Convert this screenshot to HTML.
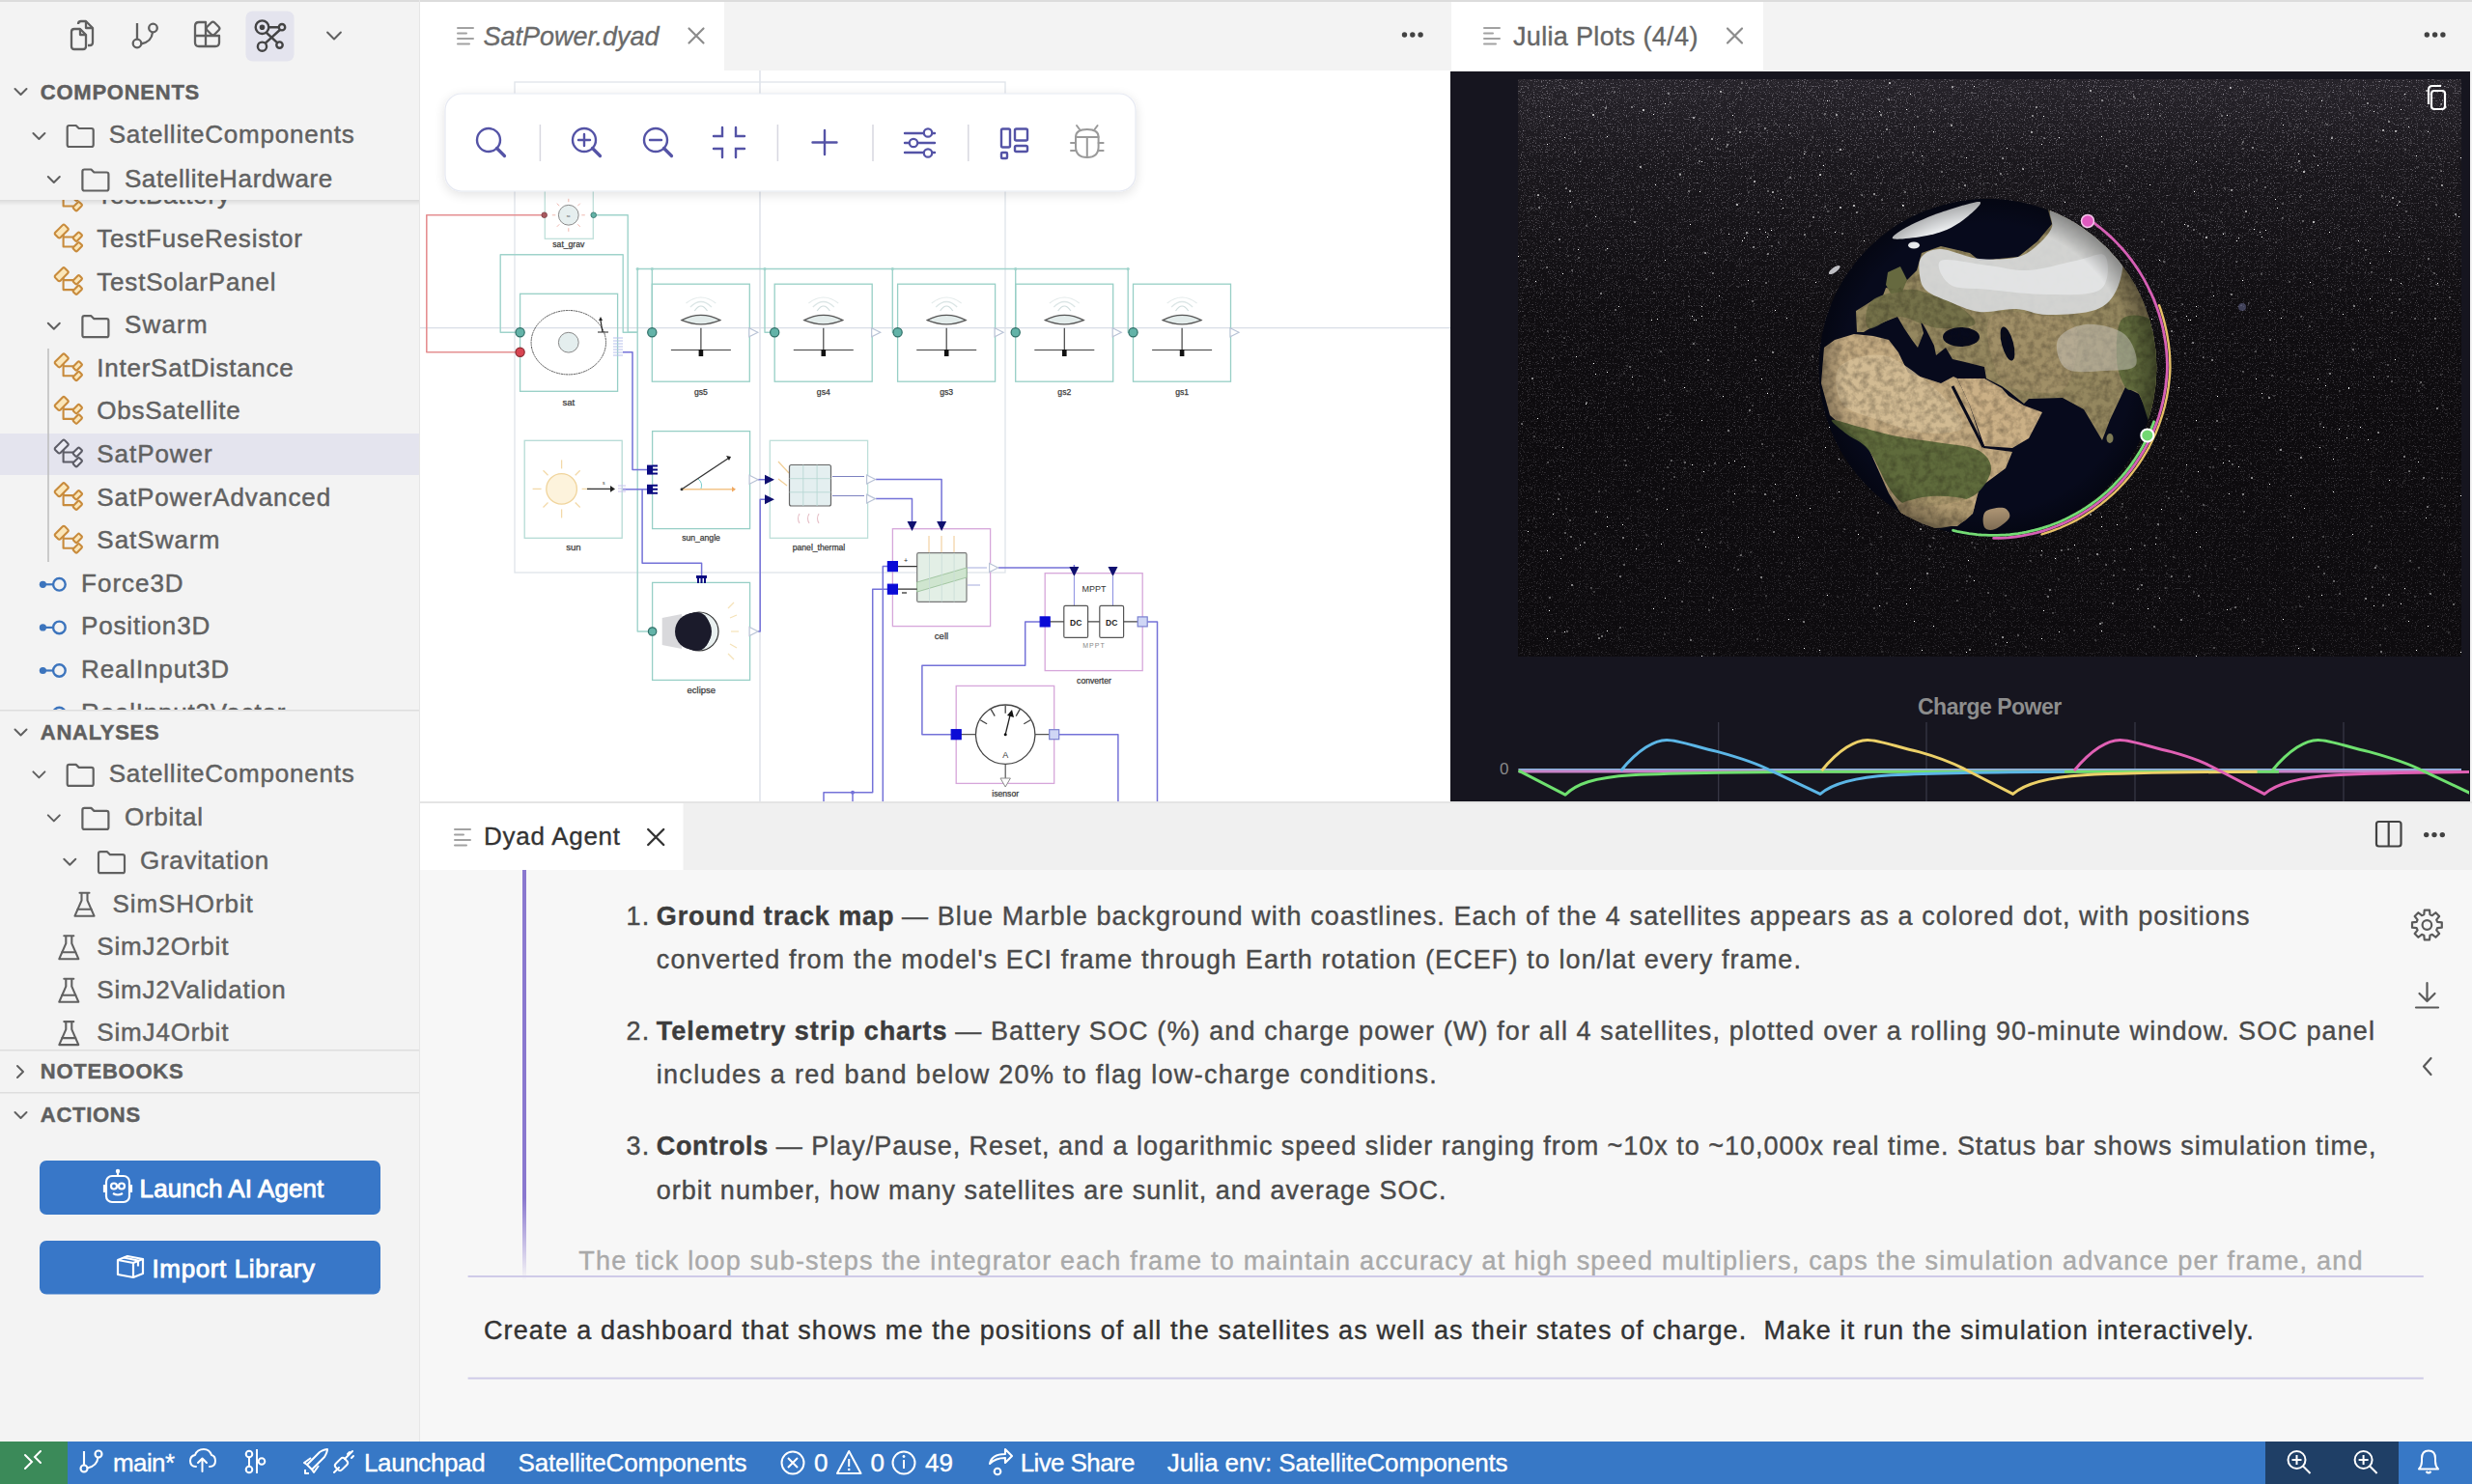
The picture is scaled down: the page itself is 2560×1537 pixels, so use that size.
<!DOCTYPE html>
<html><head><meta charset="utf-8"><style>
html,body{margin:0;padding:0;}
body{width:2560px;height:1537px;overflow:hidden;background:#f3f3f3;font-family:"Liberation Sans",sans-serif;}
svg{display:block;font-family:"Liberation Sans",sans-serif;}
</style></head><body>
<svg width="2560" height="1537" viewBox="0 0 2560 1537">
<defs>
<filter id="tbshadow" x="-10%" y="-30%" width="120%" height="160%"><feGaussianBlur in="SourceAlpha" stdDeviation="6"/><feOffset dy="3"/><feComponentTransfer><feFuncA type="linear" slope="0.12"/></feComponentTransfer><feMerge><feMergeNode/><feMergeNode in="SourceGraphic"/></feMerge></filter>
<linearGradient id="stickyshadow" x1="0" y1="0" x2="0" y2="1"><stop offset="0" stop-color="#000" stop-opacity="0.10"/><stop offset="1" stop-color="#000" stop-opacity="0"/></linearGradient>
<linearGradient id="fadebar" x1="0" y1="0" x2="0" y2="1"><stop offset="0" stop-color="#8a78cf"/><stop offset="0.8" stop-color="#8a78cf"/><stop offset="1" stop-color="#8a78cf" stop-opacity="0"/></linearGradient>
<linearGradient id="fadetext" x1="0" y1="0" x2="0" y2="1"><stop offset="0" stop-color="#f7f7f7" stop-opacity="0"/><stop offset="1" stop-color="#f7f7f7" stop-opacity="0.75"/></linearGradient>
</defs>
<rect x="0" y="0" width="2560" height="1537" fill="#f3f3f3"/>
<rect x="0" y="0" width="435" height="1493" fill="#f3f3f3"/>
<rect x="435" y="0" width="1067" height="73" fill="#f3f3f3"/>
<rect x="435" y="73" width="1067" height="757" fill="#ffffff"/>
<rect x="1502" y="0" width="1058" height="73" fill="#f3f3f3"/>
<rect x="1502" y="74" width="1056" height="756" fill="#16151f"/>
<rect x="435" y="830" width="2125" height="663" fill="#f7f7f7"/>
<rect x="435" y="832" width="2125" height="69" fill="#f0f0f0"/>
<rect x="435" y="830" width="2125" height="2" fill="#e4e4e4"/>
<rect x="0" y="0" width="2560" height="2" fill="#dcdcdc"/>
<rect x="434" y="0" width="1" height="1493" fill="#e6e6e6"/>
<rect x="254.5" y="11.5" width="50" height="52" rx="7" fill="#e4e4ee"/>
<g fill="none" stroke="#606060" stroke-width="2.3" stroke-linejoin="round"><path d="M81,25 q0,-3 3,-3 h5 l7,7 v15 q0,3 -3,3 h-2"/><path d="M74,33 q0,-3 3,-3 h6 l6,6 v12 q0,3 -3,3 h-9 q-3,0 -3,-3 z"/><path d="M83,30 v6 h6"/><path d="M89,22 v7 h7"/></g>
<g fill="none" stroke="#606060" stroke-width="2.3"><path d="M142,24 V40"/><circle cx="142" cy="45" r="4.3"/><circle cx="158.5" cy="29" r="4.3"/><path d="M158,33.5 q-1,10 -12,12"/></g>
<g fill="none" stroke="#606060" stroke-width="2.3" stroke-linejoin="round"><path d="M202,27 q0,-4 4,-4 h7 v14 h14 v7 q0,4 -4,4 h-17 q-4,0 -4,-4 z"/><path d="M202,37 h11 v11"/><rect x="215" y="24" width="11" height="11" rx="2.5" transform="rotate(45 220.5 29.5)"/></g>
<g fill="none" stroke="#444444" stroke-width="2.4"><circle cx="271.5" cy="28.2" r="6.8"/><circle cx="271.5" cy="28.2" r="1.6" fill="#444444"/><circle cx="292" cy="28.2" r="3.2"/><circle cx="271.5" cy="48.2" r="4.6"/><circle cx="289.5" cy="46.6" r="3.2"/><path d="M278.3,28.2 H288.8 M275.5,33.5 L287.3,44.3 M289.8,31 L274.6,44.8"/></g>
<path d="M339.1,33.5 L346.0,40.5 L352.9,33.5" fill="none" stroke="#606060" stroke-width="2" stroke-linecap="round" stroke-linejoin="round"/>
<path d="M15.5,92.0 L21.5,98.0 L27.5,92.0" fill="none" stroke="#606060" stroke-width="2" stroke-linecap="round" stroke-linejoin="round"/>
<text x="41.8" y="102.5" font-size="22" fill="#5f5f5f" font-weight="bold" textLength="164.5" lengthAdjust="spacing" stroke="#5f5f5f" stroke-width="0.45" style="white-space:pre">COMPONENTS</text>
<path d="M34.4,138.0 L40.4,144.0 L46.4,138.0" fill="none" stroke="#606060" stroke-width="2" stroke-linecap="round" stroke-linejoin="round"/>
<path d="M69.7,132 q0,-2 2,-2 h7 l3,3 h13 q2,0 2,2 v15 q0,2 -2,2 h-23 q-2,0 -2,-2 z" fill="none" stroke="#616161" stroke-width="2.2" stroke-linejoin="round"/>
<text x="112.7" y="148.3" font-size="26" fill="#616161" textLength="254.0" lengthAdjust="spacing" stroke="#616161" stroke-width="0.45" style="white-space:pre">SatelliteComponents</text>
<path d="M49.8,183.0 L55.8,189.0 L61.8,183.0" fill="none" stroke="#606060" stroke-width="2" stroke-linecap="round" stroke-linejoin="round"/>
<path d="M85.4,177.5 q0,-2 2,-2 h7 l3,3 h13 q2,0 2,2 v15 q0,2 -2,2 h-23 q-2,0 -2,-2 z" fill="none" stroke="#616161" stroke-width="2.2" stroke-linejoin="round"/>
<text x="128.9" y="193.6" font-size="26" fill="#616161" textLength="215.4" lengthAdjust="spacing" stroke="#616161" stroke-width="0.45" style="white-space:pre">SatelliteHardware</text>
<clipPath id="clipcomp"><rect x="0" y="207" width="434" height="528"/></clipPath>
<g clip-path="url(#clipcomp)">
<rect x="0" y="449" width="434" height="43" fill="#e4e4ee"/>
<path d="M50,361 V582" stroke="#bdbdbd" stroke-width="1.5"/>
<g transform="translate(57,192)" fill="#fbe6b8" stroke="#c88b3c" stroke-width="2.1" stroke-linejoin="round"><path d="M8.6,8 V21.5 H19 M8.6,11.5 H19" fill="none"/><rect x="-0.3" y="1.85" width="14" height="7.5" rx="1.6" transform="rotate(-45 6.7 5.6)"/><rect x="18.8" y="8.45" width="9" height="5.5" rx="1.2" transform="rotate(-45 23.3 11.2)"/><rect x="18.8" y="18.95" width="9" height="5.5" rx="1.2" transform="rotate(-45 23.3 21.7)"/></g>
<text x="100.3" y="211.4" font-size="26" fill="#616161" textLength="137.7" lengthAdjust="spacing" stroke="#616161" stroke-width="0.45" style="white-space:pre">TestBattery</text>
<g transform="translate(57,234)" fill="#fbe6b8" stroke="#c88b3c" stroke-width="2.1" stroke-linejoin="round"><path d="M8.6,8 V21.5 H19 M8.6,11.5 H19" fill="none"/><rect x="-0.3" y="1.85" width="14" height="7.5" rx="1.6" transform="rotate(-45 6.7 5.6)"/><rect x="18.8" y="8.45" width="9" height="5.5" rx="1.2" transform="rotate(-45 23.3 11.2)"/><rect x="18.8" y="18.95" width="9" height="5.5" rx="1.2" transform="rotate(-45 23.3 21.7)"/></g>
<text x="100.3" y="256.0" font-size="26" fill="#616161" textLength="212.6" lengthAdjust="spacing" stroke="#616161" stroke-width="0.45" style="white-space:pre">TestFuseResistor</text>
<g transform="translate(57,278.6)" fill="#fbe6b8" stroke="#c88b3c" stroke-width="2.1" stroke-linejoin="round"><path d="M8.6,8 V21.5 H19 M8.6,11.5 H19" fill="none"/><rect x="-0.3" y="1.85" width="14" height="7.5" rx="1.6" transform="rotate(-45 6.7 5.6)"/><rect x="18.8" y="8.45" width="9" height="5.5" rx="1.2" transform="rotate(-45 23.3 11.2)"/><rect x="18.8" y="18.95" width="9" height="5.5" rx="1.2" transform="rotate(-45 23.3 21.7)"/></g>
<text x="100.3" y="300.6" font-size="26" fill="#616161" textLength="185.2" lengthAdjust="spacing" stroke="#616161" stroke-width="0.45" style="white-space:pre">TestSolarPanel</text>
<path d="M49.8,334.7 L55.8,340.7 L61.8,334.7" fill="none" stroke="#606060" stroke-width="2" stroke-linecap="round" stroke-linejoin="round"/>
<path d="M85.4,329.2 q0,-2 2,-2 h7 l3,3 h13 q2,0 2,2 v15 q0,2 -2,2 h-23 q-2,0 -2,-2 z" fill="none" stroke="#616161" stroke-width="2.2" stroke-linejoin="round"/>
<text x="128.9" y="345.2" font-size="26" fill="#616161" textLength="85.7" lengthAdjust="spacing" stroke="#616161" stroke-width="0.45" style="white-space:pre">Swarm</text>
<g transform="translate(57,367.8)" fill="#fbe6b8" stroke="#c88b3c" stroke-width="2.1" stroke-linejoin="round"><path d="M8.6,8 V21.5 H19 M8.6,11.5 H19" fill="none"/><rect x="-0.3" y="1.85" width="14" height="7.5" rx="1.6" transform="rotate(-45 6.7 5.6)"/><rect x="18.8" y="8.45" width="9" height="5.5" rx="1.2" transform="rotate(-45 23.3 11.2)"/><rect x="18.8" y="18.95" width="9" height="5.5" rx="1.2" transform="rotate(-45 23.3 21.7)"/></g>
<text x="100.3" y="389.8" font-size="26" fill="#616161" textLength="203.5" lengthAdjust="spacing" stroke="#616161" stroke-width="0.45" style="white-space:pre">InterSatDistance</text>
<g transform="translate(57,412.4)" fill="#fbe6b8" stroke="#c88b3c" stroke-width="2.1" stroke-linejoin="round"><path d="M8.6,8 V21.5 H19 M8.6,11.5 H19" fill="none"/><rect x="-0.3" y="1.85" width="14" height="7.5" rx="1.6" transform="rotate(-45 6.7 5.6)"/><rect x="18.8" y="8.45" width="9" height="5.5" rx="1.2" transform="rotate(-45 23.3 11.2)"/><rect x="18.8" y="18.95" width="9" height="5.5" rx="1.2" transform="rotate(-45 23.3 21.7)"/></g>
<text x="100.3" y="434.4" font-size="26" fill="#616161" textLength="148.4" lengthAdjust="spacing" stroke="#616161" stroke-width="0.45" style="white-space:pre">ObsSatellite</text>
<g transform="translate(57,457)" fill="#ececf4" stroke="#5c5c66" stroke-width="2.1" stroke-linejoin="round"><path d="M8.6,8 V21.5 H19 M8.6,11.5 H19" fill="none"/><rect x="-0.3" y="1.85" width="14" height="7.5" rx="1.6" transform="rotate(-45 6.7 5.6)"/><rect x="18.8" y="8.45" width="9" height="5.5" rx="1.2" transform="rotate(-45 23.3 11.2)"/><rect x="18.8" y="18.95" width="9" height="5.5" rx="1.2" transform="rotate(-45 23.3 21.7)"/></g>
<text x="100.3" y="479.0" font-size="26" fill="#616161" textLength="119.3" lengthAdjust="spacing" stroke="#616161" stroke-width="0.45" style="white-space:pre">SatPower</text>
<g transform="translate(57,501.6)" fill="#fbe6b8" stroke="#c88b3c" stroke-width="2.1" stroke-linejoin="round"><path d="M8.6,8 V21.5 H19 M8.6,11.5 H19" fill="none"/><rect x="-0.3" y="1.85" width="14" height="7.5" rx="1.6" transform="rotate(-45 6.7 5.6)"/><rect x="18.8" y="8.45" width="9" height="5.5" rx="1.2" transform="rotate(-45 23.3 11.2)"/><rect x="18.8" y="18.95" width="9" height="5.5" rx="1.2" transform="rotate(-45 23.3 21.7)"/></g>
<text x="100.3" y="523.6" font-size="26" fill="#616161" textLength="241.8" lengthAdjust="spacing" stroke="#616161" stroke-width="0.45" style="white-space:pre">SatPowerAdvanced</text>
<g transform="translate(57,546.2)" fill="#fbe6b8" stroke="#c88b3c" stroke-width="2.1" stroke-linejoin="round"><path d="M8.6,8 V21.5 H19 M8.6,11.5 H19" fill="none"/><rect x="-0.3" y="1.85" width="14" height="7.5" rx="1.6" transform="rotate(-45 6.7 5.6)"/><rect x="18.8" y="8.45" width="9" height="5.5" rx="1.2" transform="rotate(-45 23.3 11.2)"/><rect x="18.8" y="18.95" width="9" height="5.5" rx="1.2" transform="rotate(-45 23.3 21.7)"/></g>
<text x="100.3" y="568.2" font-size="26" fill="#616161" textLength="127.0" lengthAdjust="spacing" stroke="#616161" stroke-width="0.45" style="white-space:pre">SatSwarm</text>
<circle cx="44.4" cy="605.3" r="3.6" fill="#3c74bd"/><path d="M44.4,605.3 H54.4" stroke="#3c74bd" stroke-width="2.2"/><circle cx="61.4" cy="605.3" r="6.3" fill="none" stroke="#3c74bd" stroke-width="2.4"/>
<text x="84.1" y="612.8" font-size="26" fill="#616161" textLength="105.5" lengthAdjust="spacing" stroke="#616161" stroke-width="0.45" style="white-space:pre">Force3D</text>
<circle cx="44.4" cy="649.9" r="3.6" fill="#3c74bd"/><path d="M44.4,649.9 H54.4" stroke="#3c74bd" stroke-width="2.2"/><circle cx="61.4" cy="649.9" r="6.3" fill="none" stroke="#3c74bd" stroke-width="2.4"/>
<text x="84.1" y="657.4" font-size="26" fill="#616161" textLength="133.1" lengthAdjust="spacing" stroke="#616161" stroke-width="0.45" style="white-space:pre">Position3D</text>
<circle cx="44.4" cy="694.5" r="3.6" fill="#3c74bd"/><path d="M44.4,694.5 H54.4" stroke="#3c74bd" stroke-width="2.2"/><circle cx="61.4" cy="694.5" r="6.3" fill="none" stroke="#3c74bd" stroke-width="2.4"/>
<text x="84.1" y="702.0" font-size="26" fill="#616161" textLength="153.0" lengthAdjust="spacing" stroke="#616161" stroke-width="0.45" style="white-space:pre">RealInput3D</text>
<circle cx="44.4" cy="739.1" r="3.6" fill="#3c74bd"/><path d="M44.4,739.1 H54.4" stroke="#3c74bd" stroke-width="2.2"/><circle cx="61.4" cy="739.1" r="6.3" fill="none" stroke="#3c74bd" stroke-width="2.4"/>
<text x="84.1" y="746.6" font-size="26" fill="#616161" textLength="211.2" lengthAdjust="spacing" stroke="#616161" stroke-width="0.45" style="white-space:pre">RealInput2Vector</text>
</g>
<rect x="0" y="207" width="434" height="6" fill="url(#stickyshadow)"/>
<rect x="0" y="735" width="434" height="1.5" fill="#dedede"/>
<path d="M15.5,755.5 L21.5,761.5 L27.5,755.5" fill="none" stroke="#606060" stroke-width="2" stroke-linecap="round" stroke-linejoin="round"/>
<text x="41.8" y="765.9" font-size="22" fill="#5f5f5f" font-weight="bold" textLength="122.9" lengthAdjust="spacing" stroke="#5f5f5f" stroke-width="0.45" style="white-space:pre">ANALYSES</text>
<path d="M34.4,799.4 L40.4,805.4 L46.4,799.4" fill="none" stroke="#606060" stroke-width="2" stroke-linecap="round" stroke-linejoin="round"/>
<path d="M69.7,793.9 q0,-2 2,-2 h7 l3,3 h13 q2,0 2,2 v15 q0,2 -2,2 h-23 q-2,0 -2,-2 z" fill="none" stroke="#616161" stroke-width="2.2" stroke-linejoin="round"/>
<text x="112.7" y="809.9" font-size="26" fill="#616161" textLength="254.0" lengthAdjust="spacing" stroke="#616161" stroke-width="0.45" style="white-space:pre">SatelliteComponents</text>
<path d="M49.8,844.4 L55.8,850.4 L61.8,844.4" fill="none" stroke="#606060" stroke-width="2" stroke-linecap="round" stroke-linejoin="round"/>
<path d="M85.4,838.9 q0,-2 2,-2 h7 l3,3 h13 q2,0 2,2 v15 q0,2 -2,2 h-23 q-2,0 -2,-2 z" fill="none" stroke="#616161" stroke-width="2.2" stroke-linejoin="round"/>
<text x="128.9" y="854.9" font-size="26" fill="#616161" textLength="81.1" lengthAdjust="spacing" stroke="#616161" stroke-width="0.45" style="white-space:pre">Orbital</text>
<path d="M66.3,889.7 L72.3,895.7 L78.3,889.7" fill="none" stroke="#606060" stroke-width="2" stroke-linecap="round" stroke-linejoin="round"/>
<path d="M102,884.2 q0,-2 2,-2 h7 l3,3 h13 q2,0 2,2 v15 q0,2 -2,2 h-23 q-2,0 -2,-2 z" fill="none" stroke="#616161" stroke-width="2.2" stroke-linejoin="round"/>
<text x="145.0" y="900.2" font-size="26" fill="#616161" textLength="133.1" lengthAdjust="spacing" stroke="#616161" stroke-width="0.45" style="white-space:pre">Gravitation</text>
<g transform="translate(75.5,923.7)" fill="none" stroke="#616161" stroke-width="2.1" stroke-linejoin="round" stroke-linecap="round"><path d="M7,1 H17 M9,1 V9 L2,25 H22 L15,9 V1"/><path d="M5,18 H19"/></g>
<text x="116.5" y="944.7" font-size="26" fill="#616161" textLength="145.3" lengthAdjust="spacing" stroke="#616161" stroke-width="0.45" style="white-space:pre">SimSHOrbit</text>
<g transform="translate(59.3,968.2)" fill="none" stroke="#616161" stroke-width="2.1" stroke-linejoin="round" stroke-linecap="round"><path d="M7,1 H17 M9,1 V9 L2,25 H22 L15,9 V1"/><path d="M5,18 H19"/></g>
<text x="100.3" y="989.2" font-size="26" fill="#616161" textLength="136.1" lengthAdjust="spacing" stroke="#616161" stroke-width="0.45" style="white-space:pre">SimJ2Orbit</text>
<g transform="translate(59.3,1012.7)" fill="none" stroke="#616161" stroke-width="2.1" stroke-linejoin="round" stroke-linecap="round"><path d="M7,1 H17 M9,1 V9 L2,25 H22 L15,9 V1"/><path d="M5,18 H19"/></g>
<text x="100.3" y="1033.7" font-size="26" fill="#616161" textLength="195.4" lengthAdjust="spacing" stroke="#616161" stroke-width="0.45" style="white-space:pre">SimJ2Validation</text>
<g transform="translate(59.3,1057.1)" fill="none" stroke="#616161" stroke-width="2.1" stroke-linejoin="round" stroke-linecap="round"><path d="M7,1 H17 M9,1 V9 L2,25 H22 L15,9 V1"/><path d="M5,18 H19"/></g>
<text x="100.3" y="1078.1" font-size="26" fill="#616161" textLength="136.1" lengthAdjust="spacing" stroke="#616161" stroke-width="0.45" style="white-space:pre">SimJ4Orbit</text>
<rect x="0" y="1087" width="434" height="1.5" fill="#dedede"/>
<path d="M18.0,1104.0 L24.0,1110.0 L18.0,1116.0" fill="none" stroke="#606060" stroke-width="2" stroke-linecap="round" stroke-linejoin="round"/>
<text x="41.8" y="1117.2" font-size="22" fill="#5f5f5f" font-weight="bold" textLength="147.9" lengthAdjust="spacing" stroke="#5f5f5f" stroke-width="0.45" style="white-space:pre">NOTEBOOKS</text>
<rect x="0" y="1131" width="434" height="1.5" fill="#dedede"/>
<path d="M15.5,1152.0 L21.5,1158.0 L27.5,1152.0" fill="none" stroke="#606060" stroke-width="2" stroke-linecap="round" stroke-linejoin="round"/>
<text x="41.8" y="1162.4" font-size="22" fill="#5f5f5f" font-weight="bold" textLength="103.3" lengthAdjust="spacing" stroke="#5f5f5f" stroke-width="0.45" style="white-space:pre">ACTIONS</text>
<rect x="41" y="1202" width="353" height="56" rx="7" fill="#3877c8"/>
<rect x="41" y="1285" width="353" height="55.5" rx="7" fill="#3877c8"/>
<g fill="none" stroke="#fff" stroke-width="2.2"><rect x="110" y="1218" width="24" height="27" rx="6"/><circle cx="118" cy="1228.5" r="3"/><circle cx="126" cy="1228.5" r="3"/><path d="M117,1236 q5,3 10,0"/><path d="M122,1218 v-4"/><path d="M108,1227 v8 M136,1227 v8"/></g><circle cx="122" cy="1213" r="2.2" fill="#fff"/>
<text x="144.6" y="1240.0" font-size="26" fill="#ffffff" textLength="190.7" lengthAdjust="spacing" stroke="#fff" stroke-width="0.9" style="white-space:pre">Launch AI Agent</text>
<g fill="none" stroke="#fff" stroke-width="2.2" stroke-linejoin="round"><path d="M122,1305 l10,-4 l16,3 v15 l-10,4 l-16,-3 z"/><path d="M122,1305 l16,3 l10,-4 M138,1308 v15 M128,1302.5 l15,3 v6"/></g>
<text x="157.5" y="1323.0" font-size="26" fill="#ffffff" textLength="168.5" lengthAdjust="spacing" stroke="#fff" stroke-width="0.9" style="white-space:pre">Import Library</text>
<rect x="435" y="2" width="315" height="71" fill="#ffffff"/>
<g stroke="#a2a2a2" stroke-width="2" stroke-linecap="round"><path d="M474,29 H490 M474,34.5 H483 M474,40 H490 M474,45.5 H486"/></g>
<text x="500.5" y="47.0" font-size="27" fill="#6a6a6a" font-style="italic" textLength="182.0" lengthAdjust="spacing" stroke="#6a6a6a" stroke-width="0.35" style="white-space:pre">SatPower.dyad</text>
<path d="M713.5,29.5 L728.5,44.5 M728.5,29.5 L713.5,44.5" stroke="#8c8c8c" stroke-width="2.2" stroke-linecap="round"/>
<circle cx="1454.5" cy="36" r="2.7" fill="#424242"/><circle cx="1462.8" cy="36" r="2.7" fill="#424242"/><circle cx="1471.1" cy="36" r="2.7" fill="#424242"/>
<rect x="1503" y="2" width="323" height="71" fill="#ffffff"/>
<g stroke="#a2a2a2" stroke-width="2" stroke-linecap="round"><path d="M1537,29 H1553 M1537,34.5 H1546 M1537,40 H1553 M1537,45.5 H1549"/></g>
<text x="1567.0" y="47.0" font-size="27" fill="#666666" textLength="191.4" lengthAdjust="spacing" stroke="#666666" stroke-width="0.35" style="white-space:pre">Julia Plots (4/4)</text>
<path d="M1789.0,29.5 L1804.0,44.5 M1804.0,29.5 L1789.0,44.5" stroke="#8c8c8c" stroke-width="2.2" stroke-linecap="round"/>
<circle cx="2513.2999999999997" cy="36" r="2.7" fill="#424242"/><circle cx="2521.6" cy="36" r="2.7" fill="#424242"/><circle cx="2529.9" cy="36" r="2.7" fill="#424242"/>
<rect x="435" y="832" width="272.5" height="69" fill="#ffffff"/>
<g stroke="#a2a2a2" stroke-width="2" stroke-linecap="round"><path d="M471,859 H487 M471,864.5 H480 M471,870 H487 M471,875.5 H483"/></g>
<text x="501.0" y="875.0" font-size="26" fill="#333333" textLength="141.0" lengthAdjust="spacing" stroke="#333333" stroke-width="0.35" style="white-space:pre">Dyad Agent</text>
<path d="M671.2,859 L687.2,875 M687.2,859 L671.2,875" stroke="#333333" stroke-width="2.4" stroke-linecap="round"/>
<g fill="none" stroke="#424242" stroke-width="2.2"><rect x="2461" y="851" width="25.5" height="25.5" rx="2.5"/><path d="M2473.7,851 V876.5"/></g>
<circle cx="2512.7" cy="864.6" r="2.7" fill="#424242"/><circle cx="2521" cy="864.6" r="2.7" fill="#424242"/><circle cx="2529.3" cy="864.6" r="2.7" fill="#424242"/>
<clipPath id="clipdiag"><rect x="435" y="73" width="1067" height="757"/></clipPath>
<g clip-path="url(#clipdiag)">
<path d="M787,73 V830 M435,339.6 H1502" stroke="#d9dee6" stroke-width="1.3" fill="none"/>
<rect x="533" y="85" width="508" height="508" fill="none" stroke="#dfe4ea" stroke-width="1.3"/>
<path d="M563.7,222.75 H441.8 V364.7 H538.6" fill="none" stroke="#e58f91" stroke-width="1.6" stroke-linejoin="round"/>
<path d="M614.7,222.75 H650.2 V344.3 H660.2" fill="none" stroke="#9fd3cb" stroke-width="1.4" stroke-linejoin="round"/>
<path d="M538.6,344.3 H518.2 V263.7 H645.2 V344.3 H660.2" fill="none" stroke="#9fd3cb" stroke-width="1.4" stroke-linejoin="round"/>
<path d="M660.2,344.3 V278.5 H1168.2 V344.3 H1173.5" fill="none" stroke="#9fd3cb" stroke-width="1.4" stroke-linejoin="round"/>
<path d="M675.3,278.5 V344.3" fill="none" stroke="#9fd3cb" stroke-width="1.4" stroke-linejoin="round"/>
<path d="M792,278.5 V344.3 H802.2" fill="none" stroke="#9fd3cb" stroke-width="1.4" stroke-linejoin="round"/>
<path d="M924.3,278.5 V344.3 H929.6" fill="none" stroke="#9fd3cb" stroke-width="1.4" stroke-linejoin="round"/>
<path d="M1051.7,278.5 V344.3" fill="none" stroke="#9fd3cb" stroke-width="1.4" stroke-linejoin="round"/>
<path d="M660.2,344.3 V654 H675.6" fill="none" stroke="#9fd3cb" stroke-width="1.4" stroke-linejoin="round"/>
<circle cx="660.2" cy="278.5" r="1.6" fill="#9fd3cb"/>
<circle cx="675.3" cy="278.5" r="1.6" fill="#9fd3cb"/>
<circle cx="792" cy="278.5" r="1.6" fill="#9fd3cb"/>
<circle cx="924.3" cy="278.5" r="1.6" fill="#9fd3cb"/>
<circle cx="1051.7" cy="278.5" r="1.6" fill="#9fd3cb"/>
<circle cx="1168.2" cy="278.5" r="1.6" fill="#9fd3cb"/>
<path d="M645,364.7 H655 V486.6 H670" fill="none" stroke="#7472d8" stroke-width="1.5" stroke-linejoin="round"/>
<path d="M644.5,506.8 H670" fill="none" stroke="#7472d8" stroke-width="1.5" stroke-linejoin="round"/>
<path d="M665.1,506.8 V583.2 H726.6 V598" fill="none" stroke="#7472d8" stroke-width="1.5" stroke-linejoin="round"/>
<path d="M785,496.7 H796" fill="none" stroke="#7472d8" stroke-width="1.5" stroke-linejoin="round"/>
<path d="M785,654 H787.2 V517.3 H796" fill="none" stroke="#7472d8" stroke-width="1.5" stroke-linejoin="round"/>
<path d="M907,496.5 H975.1 V540" fill="none" stroke="#7472d8" stroke-width="1.5" stroke-linejoin="round"/>
<path d="M907,516.6 H944.5 V540" fill="none" stroke="#7472d8" stroke-width="1.5" stroke-linejoin="round"/>
<path d="M1034,588 H1112.4 V585" fill="none" stroke="#7472d8" stroke-width="1.5" stroke-linejoin="round"/>
<path d="M919,586.6 H914.3 V830" fill="none" stroke="#7472d8" stroke-width="1.5" stroke-linejoin="round"/>
<path d="M919,610.2 H903.7 V820.8 H853 V830" fill="none" stroke="#7472d8" stroke-width="1.5" stroke-linejoin="round"/>
<circle cx="883" cy="820.8" r="2" fill="#7472d8"/>
<path d="M883,820.8 V830" fill="none" stroke="#7472d8" stroke-width="1.5" stroke-linejoin="round"/>
<path d="M1077,643.9 H1061.7 V689.2 H954.9 V760.7 H985" fill="none" stroke="#7472d8" stroke-width="1.5" stroke-linejoin="round"/>
<path d="M1097,760.7 H1157.9 V830" fill="none" stroke="#7472d8" stroke-width="1.5" stroke-linejoin="round"/>
<path d="M1188,643.9 H1198.5 V830" fill="none" stroke="#7472d8" stroke-width="1.5" stroke-linejoin="round"/>
<rect x="564.3" y="160" width="50" height="87.3" fill="#ffffff" fill-opacity="0" stroke="#bfe0da" stroke-width="1.3"/>
<circle cx="588.8" cy="222.75" r="10.4" fill="#e6efef" stroke="#8a8a8a" stroke-width="1"/>
<path d="M602.3,222.8 L605.8,222.8" stroke="#f0b8b0" stroke-width="1"/>
<path d="M598.3,232.3 L600.8,234.8" stroke="#f0b8b0" stroke-width="1"/>
<path d="M588.8,236.2 L588.8,239.8" stroke="#f0b8b0" stroke-width="1"/>
<path d="M579.3,232.3 L576.8,234.8" stroke="#f0b8b0" stroke-width="1"/>
<path d="M575.3,222.8 L571.8,222.8" stroke="#f0b8b0" stroke-width="1"/>
<path d="M579.3,213.2 L576.8,210.7" stroke="#f0b8b0" stroke-width="1"/>
<path d="M588.8,209.2 L588.8,205.8" stroke="#f0b8b0" stroke-width="1"/>
<path d="M598.3,213.2 L600.8,210.7" stroke="#f0b8b0" stroke-width="1"/>
<text x="588.8" y="224.5" font-size="4" fill="#333" text-anchor="middle">sc</text>
<circle cx="563.7" cy="222.75" r="2.8" fill="#a95a60" stroke="#7a3a40" stroke-width="0.8"/>
<circle cx="614.7" cy="222.75" r="2.8" fill="#63b3a8" stroke="#2e6e66" stroke-width="0.8"/>
<text x="588.8" y="256.0" font-size="8.6" fill="#3a3a3a" stroke="#3a3a3a" stroke-width="0.25" text-anchor="middle">sat_grav</text>
<rect x="538.6" y="304.3" width="101" height="101" fill="#ffffff" fill-opacity="0" stroke="#97cfc6" stroke-width="1.3"/>
<ellipse cx="588.8" cy="354.7" rx="38.7" ry="33.2" fill="none" stroke="#555" stroke-width="1" stroke-dasharray="2,0.6"/>
<circle cx="588.8" cy="354.7" r="10.4" fill="#e4eeee" stroke="#888" stroke-width="1"/>
<path d="M624,344 L622,332 M619,344 H630" stroke="#222" stroke-width="1.2"/>
<path d="M620,332 l2,-4 l2,4 z" fill="#222"/>
<path d="M635,350 H645" stroke="#b8c0ec" stroke-width="1"/>
<path d="M635,353 H645" stroke="#b8c0ec" stroke-width="1"/>
<path d="M635,356 H645" stroke="#b8c0ec" stroke-width="1"/>
<path d="M635,359 H645" stroke="#b8c0ec" stroke-width="1"/>
<path d="M635,362 H645" stroke="#b8c0ec" stroke-width="1"/>
<path d="M635,365 H645" stroke="#b8c0ec" stroke-width="1"/>
<path d="M635,368 H645" stroke="#b8c0ec" stroke-width="1"/>
<circle cx="538.6" cy="344.3" r="4.6" fill="#63b3a8" stroke="#2e6e66" stroke-width="1.2"/>
<circle cx="538.6" cy="364.7" r="4.6" fill="#d84552" stroke="#8a2a30" stroke-width="1.2"/>
<text x="588.8" y="419.5" font-size="9.5" fill="#3a3a3a" stroke="#3a3a3a" stroke-width="0.25" text-anchor="middle">sat</text>
<rect x="675.3" y="294.2" width="101" height="101" fill="#ffffff" fill-opacity="0" stroke="#97cfc6" stroke-width="1.3"/>
<path d="M719.3,322 Q725.9,312 732.5,322" fill="none" stroke="#c9d8d8" stroke-opacity="0.8999999999999999" stroke-width="1.2"/>
<path d="M714.9,318 Q725.9,307 736.9,318" fill="none" stroke="#c9d8d8" stroke-opacity="0.6499999999999999" stroke-width="1.2"/>
<path d="M710.5,314 Q725.9,302 741.3,314" fill="none" stroke="#c9d8d8" stroke-opacity="0.5" stroke-width="1.2"/>
<path d="M705.9,331.6 Q725.9,321 745.9,331.6 Q725.9,340 705.9,331.6 Z" fill="#e3eceb" stroke="#555" stroke-width="1.2"/>
<path d="M725.9,339.7 V363 M694.9,362.5 H756.9" stroke="#444" stroke-width="1.2"/>
<rect x="723.6" y="362" width="4.6" height="7" fill="#111"/>
<circle cx="675.3" cy="344.3" r="4.6" fill="#63b3a8" stroke="#2e6e66" stroke-width="1.2"/>
<path d="M775.8,339.8 L784.8,344.3 L775.8,348.8 Z" fill="#ffffff" stroke="#b9c3d6" stroke-width="1.2"/>
<text x="725.9" y="409.0" font-size="8.6" fill="#3a3a3a" stroke="#3a3a3a" stroke-width="0.25" text-anchor="middle">gs5</text>
<rect x="802.2" y="294.2" width="101" height="101" fill="#ffffff" fill-opacity="0" stroke="#97cfc6" stroke-width="1.3"/>
<path d="M846.2,322 Q852.8000000000001,312 859.4000000000001,322" fill="none" stroke="#c9d8d8" stroke-opacity="0.8999999999999999" stroke-width="1.2"/>
<path d="M841.8000000000001,318 Q852.8000000000001,307 863.8000000000001,318" fill="none" stroke="#c9d8d8" stroke-opacity="0.6499999999999999" stroke-width="1.2"/>
<path d="M837.4000000000001,314 Q852.8000000000001,302 868.2,314" fill="none" stroke="#c9d8d8" stroke-opacity="0.5" stroke-width="1.2"/>
<path d="M832.8000000000001,331.6 Q852.8000000000001,321 872.8000000000001,331.6 Q852.8000000000001,340 832.8000000000001,331.6 Z" fill="#e3eceb" stroke="#555" stroke-width="1.2"/>
<path d="M852.8000000000001,339.7 V363 M821.8000000000001,362.5 H883.8000000000001" stroke="#444" stroke-width="1.2"/>
<rect x="850.5000000000001" y="362" width="4.6" height="7" fill="#111"/>
<circle cx="802.2" cy="344.3" r="4.6" fill="#63b3a8" stroke="#2e6e66" stroke-width="1.2"/>
<path d="M902.7,339.8 L911.7,344.3 L902.7,348.8 Z" fill="#ffffff" stroke="#b9c3d6" stroke-width="1.2"/>
<text x="852.8000000000001" y="409.0" font-size="8.6" fill="#3a3a3a" stroke="#3a3a3a" stroke-width="0.25" text-anchor="middle">gs4</text>
<rect x="929.6" y="294.2" width="101" height="101" fill="#ffffff" fill-opacity="0" stroke="#97cfc6" stroke-width="1.3"/>
<path d="M973.6,322 Q980.2,312 986.8000000000001,322" fill="none" stroke="#c9d8d8" stroke-opacity="0.8999999999999999" stroke-width="1.2"/>
<path d="M969.2,318 Q980.2,307 991.2,318" fill="none" stroke="#c9d8d8" stroke-opacity="0.6499999999999999" stroke-width="1.2"/>
<path d="M964.8000000000001,314 Q980.2,302 995.6,314" fill="none" stroke="#c9d8d8" stroke-opacity="0.5" stroke-width="1.2"/>
<path d="M960.2,331.6 Q980.2,321 1000.2,331.6 Q980.2,340 960.2,331.6 Z" fill="#e3eceb" stroke="#555" stroke-width="1.2"/>
<path d="M980.2,339.7 V363 M949.2,362.5 H1011.2" stroke="#444" stroke-width="1.2"/>
<rect x="977.9000000000001" y="362" width="4.6" height="7" fill="#111"/>
<circle cx="929.6" cy="344.3" r="4.6" fill="#63b3a8" stroke="#2e6e66" stroke-width="1.2"/>
<path d="M1030.1,339.8 L1039.1,344.3 L1030.1,348.8 Z" fill="#ffffff" stroke="#b9c3d6" stroke-width="1.2"/>
<text x="980.2" y="409.0" font-size="8.6" fill="#3a3a3a" stroke="#3a3a3a" stroke-width="0.25" text-anchor="middle">gs3</text>
<rect x="1051.7" y="294.2" width="101" height="101" fill="#ffffff" fill-opacity="0" stroke="#97cfc6" stroke-width="1.3"/>
<path d="M1095.7,322 Q1102.3,312 1108.8999999999999,322" fill="none" stroke="#c9d8d8" stroke-opacity="0.8999999999999999" stroke-width="1.2"/>
<path d="M1091.3,318 Q1102.3,307 1113.3,318" fill="none" stroke="#c9d8d8" stroke-opacity="0.6499999999999999" stroke-width="1.2"/>
<path d="M1086.8999999999999,314 Q1102.3,302 1117.7,314" fill="none" stroke="#c9d8d8" stroke-opacity="0.5" stroke-width="1.2"/>
<path d="M1082.3,331.6 Q1102.3,321 1122.3,331.6 Q1102.3,340 1082.3,331.6 Z" fill="#e3eceb" stroke="#555" stroke-width="1.2"/>
<path d="M1102.3,339.7 V363 M1071.3,362.5 H1133.3" stroke="#444" stroke-width="1.2"/>
<rect x="1100.0" y="362" width="4.6" height="7" fill="#111"/>
<circle cx="1051.7" cy="344.3" r="4.6" fill="#63b3a8" stroke="#2e6e66" stroke-width="1.2"/>
<path d="M1152.2,339.8 L1161.2,344.3 L1152.2,348.8 Z" fill="#ffffff" stroke="#b9c3d6" stroke-width="1.2"/>
<text x="1102.3" y="409.0" font-size="8.6" fill="#3a3a3a" stroke="#3a3a3a" stroke-width="0.25" text-anchor="middle">gs2</text>
<rect x="1173.5" y="294.2" width="101" height="101" fill="#ffffff" fill-opacity="0" stroke="#97cfc6" stroke-width="1.3"/>
<path d="M1217.5,322 Q1224.1,312 1230.6999999999998,322" fill="none" stroke="#c9d8d8" stroke-opacity="0.8999999999999999" stroke-width="1.2"/>
<path d="M1213.1,318 Q1224.1,307 1235.1,318" fill="none" stroke="#c9d8d8" stroke-opacity="0.6499999999999999" stroke-width="1.2"/>
<path d="M1208.6999999999998,314 Q1224.1,302 1239.5,314" fill="none" stroke="#c9d8d8" stroke-opacity="0.5" stroke-width="1.2"/>
<path d="M1204.1,331.6 Q1224.1,321 1244.1,331.6 Q1224.1,340 1204.1,331.6 Z" fill="#e3eceb" stroke="#555" stroke-width="1.2"/>
<path d="M1224.1,339.7 V363 M1193.1,362.5 H1255.1" stroke="#444" stroke-width="1.2"/>
<rect x="1221.8" y="362" width="4.6" height="7" fill="#111"/>
<circle cx="1173.5" cy="344.3" r="4.6" fill="#63b3a8" stroke="#2e6e66" stroke-width="1.2"/>
<path d="M1274.0,339.8 L1283.0,344.3 L1274.0,348.8 Z" fill="#ffffff" stroke="#b9c3d6" stroke-width="1.2"/>
<text x="1224.1" y="409.0" font-size="8.6" fill="#3a3a3a" stroke="#3a3a3a" stroke-width="0.25" text-anchor="middle">gs1</text>
<rect x="543.2" y="456.3" width="101" height="101" fill="#ffffff" fill-opacity="0" stroke="#b5dbd5" stroke-width="1.3"/>
<g stroke="#f3d9a8" stroke-width="1.3">
<path d="M602.6,506.4 L611.6,506.4"/>
<path d="M595.7,520.5 L600.7,525.5"/>
<path d="M581.6,527.4 L581.6,536.4"/>
<path d="M567.5,520.5 L562.5,525.5"/>
<path d="M560.6,506.4 L551.6,506.4"/>
<path d="M567.5,492.3 L562.5,487.3"/>
<path d="M581.6,485.4 L581.6,476.4"/>
<path d="M595.7,492.3 L600.7,487.3"/>
</g>
<circle cx="581.6" cy="506.4" r="15.8" fill="#fdf3dc" stroke="#f0d49c" stroke-width="1.3"/>
<path d="M608,506.4 H634" stroke="#333" stroke-width="1.3"/><path d="M632,503 L637,506.4 L632,509.8 z" fill="#222"/>
<text x="624" y="502" font-size="5" fill="#333">s</text>
<path d="M640,503 H648" stroke="#c8c0ec" stroke-width="1"/>
<path d="M640,506 H648" stroke="#c8c0ec" stroke-width="1"/>
<path d="M640,509 H648" stroke="#c8c0ec" stroke-width="1"/>
<text x="594" y="570.0" font-size="9.5" fill="#3a3a3a" stroke="#3a3a3a" stroke-width="0.25" text-anchor="middle">sun</text>
<rect x="675.6" y="446.6" width="101" height="101" fill="#ffffff" fill-opacity="0" stroke="#97cfc6" stroke-width="1.3"/>
<path d="M706,506.8 L756,473.5" stroke="#333" stroke-width="1.3"/><path d="M752,472 l5,1 l-2,4 z" fill="#222"/>
<path d="M706,506.8 H761" stroke="#f3c58a" stroke-width="1.4"/><path d="M758,504 l4,2.8 l-4,2.8 z" fill="#f0a860"/>
<path d="M723,496 Q728,500 726,506" fill="none" stroke="#7cc" stroke-width="1"/>
<circle cx="706" cy="506.8" r="1.5" fill="#333"/>
<g fill="#0a0a80"><rect x="670" y="481.6" width="6" height="10"/><path d="M676,481.6 h5 v2 h-5 z M676,485.6 h5 v2 h-5 z M676,489.6 h5 v2 h-5 z"/></g>
<g fill="#0a0a80"><rect x="670" y="501.8" width="6" height="10"/><path d="M676,501.8 h5 v2 h-5 z M676,505.8 h5 v2 h-5 z M676,509.8 h5 v2 h-5 z"/></g>
<path d="M776.1,492.2 L785.1,496.7 L776.1,501.2 Z" fill="#ffffff" stroke="#b9c3d6" stroke-width="1.2"/>
<text x="726" y="560.0" font-size="8.6" fill="#3a3a3a" stroke="#3a3a3a" stroke-width="0.25" text-anchor="middle">sun_angle</text>
<rect x="675.6" y="603.4" width="101" height="101" fill="#ffffff" fill-opacity="0" stroke="#97cfc6" stroke-width="1.3"/>
<path d="M685.7,640 L706,636 V672 L685.7,668 Z" fill="#d9d9dc"/>
<circle cx="724" cy="654" r="20" fill="#e9f0f0" stroke="#333" stroke-width="1.2"/>
<path d="M722,634 A20,20 0 0 0 722,674 A14,20 0 0 0 722,634 Z" fill="#1b1b2b"/>
<circle cx="718" cy="654" r="19" fill="#1b1b2b"/>
<path d="M754,630 L760,624" stroke="#f5e2b8" stroke-width="1.2"/>
<path d="M756,640 L763,637" stroke="#f5e2b8" stroke-width="1.2"/>
<path d="M757,654 L765,654" stroke="#f5e2b8" stroke-width="1.2"/>
<path d="M756,667 L763,671" stroke="#f5e2b8" stroke-width="1.2"/>
<path d="M754,677 L760,683" stroke="#f5e2b8" stroke-width="1.2"/>
<g fill="#0a0a80"><path d="M722,596 h2 v8 h-2 z M725.5,596 h2 v8 h-2 z M729,596 h2 v8 h-2 z"/><rect x="721" y="596" width="11" height="3"/></g>
<circle cx="675.6" cy="654" r="4.2" fill="#63b3a8" stroke="#2e6e66" stroke-width="1.2"/>
<path d="M776.1,649.5 L785.1,654 L776.1,658.5 Z" fill="#ffffff" stroke="#b9c3d6" stroke-width="1.2"/>
<text x="726.3" y="718.0" font-size="9.5" fill="#3a3a3a" stroke="#3a3a3a" stroke-width="0.25" text-anchor="middle">eclipse</text>
<rect x="797.3" y="456.3" width="101.3" height="101" fill="#ffffff" fill-opacity="0" stroke="#bddfd9" stroke-width="1.3"/>
<path d="M806,478 L817,490 M806,496 L815,503" stroke="#f1d09a" stroke-width="1.3"/>
<rect x="817.5" y="481.5" width="43" height="42.5" rx="2" fill="#e4eff0" stroke="#666" stroke-width="1.2"/>
<path d="M831.8,481.5 V524 M846.1,481.5 V524 M817.5,495.7 H860.5 M817.5,509.8 H860.5" stroke="#b8d8d4" stroke-width="0.9"/>
<path d="M828,532 q-3,5 0,10 M838,532 q-3,5 0,10 M848,532 q-3,5 0,10" fill="none" stroke="#e6c0c8" stroke-width="1.1"/>
<path d="M862,493.5 H895 M862,513.5 H895" stroke="#7d82c0" stroke-width="1"/>
<path d="M792,491.7 L802,496.7 L792,501.7 Z" fill="#101070"/>
<path d="M792,512.3 L802,517.3 L792,522.3 Z" fill="#101070"/>
<path d="M897.6,492.0 L906.6,496.5 L897.6,501.0 Z" fill="#ffffff" stroke="#b9c3d6" stroke-width="1.2"/>
<path d="M897.6,512.1 L906.6,516.6 L897.6,521.1 Z" fill="#ffffff" stroke="#b9c3d6" stroke-width="1.2"/>
<text x="848" y="570.0" font-size="8.6" fill="#3a3a3a" stroke="#3a3a3a" stroke-width="0.25" text-anchor="middle">panel_thermal</text>
<rect x="924.4" y="547.7" width="101.2" height="100.9" fill="#ffffff" fill-opacity="0" stroke="#d6a6da" stroke-width="1.3"/>
<path d="M962,555 V572 M975,555 V572 M988,555 V572" stroke="#f0c890" stroke-width="1"/>
<rect x="949.7" y="572.7" width="51.3" height="50.7" rx="1.5" fill="#e3efe6" stroke="#777" stroke-width="1.2"/>
<path d="M949.7,603 L1001,588 V598 L949.7,613 Z" fill="#cfe5cf" stroke="#9cc29c" stroke-width="0.9"/>
<path d="M962.5,572.7 V623.4 M975.3,572.7 V623.4 M988.1,572.7 V623.4" stroke="#c8dcd8" stroke-width="0.8"/>
<path d="M929,586.6 H949.7 M929,610.2 H949.7" stroke="#333" stroke-width="1.2"/>
<text x="936" y="583" font-size="7" fill="#222">+</text><path d="M934,614 h5" stroke="#222" stroke-width="1.2"/>
<rect x="919.4" y="581.6" width="10" height="10" fill="#0b0bd6" stroke="#0b0bd6" stroke-width="1.2"/>
<rect x="919.4" y="605.2" width="10" height="10" fill="#0b0bd6" stroke="#0b0bd6" stroke-width="1.2"/>
<path d="M939.5,540 L949.5,540 L944.5,550 Z" fill="#101070"/>
<path d="M970.1,540 L980.1,540 L975.1,550 Z" fill="#101070"/>
<path d="M1024.6,583.5 L1033.6,588 L1024.6,592.5 Z" fill="#ffffff" stroke="#b9c3d6" stroke-width="1.2"/>
<path d="M1002,588 H1022 M1002,606 H1015" stroke="#9aa0d8" stroke-width="0.9"/>
<text x="975" y="662.0" font-size="9.5" fill="#3a3a3a" stroke="#3a3a3a" stroke-width="0.25" text-anchor="middle">cell</text>
<rect x="1082.2" y="593.7" width="101" height="100.9" fill="#ffffff" fill-opacity="0" stroke="#d6a6da" stroke-width="1.3"/>
<path d="M1107.4,587 L1117.4,587 L1112.4,597 Z" fill="#101070"/>
<path d="M1147.5,587 L1157.5,587 L1152.5,597 Z" fill="#101070"/>
<path d="M1112.4,597 V627.4 M1152.5,597 V627.4" stroke="#8a8ee0" stroke-width="1"/>
<text x="1133" y="612.5" font-size="9" fill="#333" text-anchor="middle">MPPT</text>
<rect x="1101.8" y="627.4" width="24.8" height="33" rx="1.5" fill="#fff" stroke="#555" stroke-width="1.2"/>
<rect x="1138.8" y="627.4" width="24.8" height="33" rx="1.5" fill="#fff" stroke="#555" stroke-width="1.2"/>
<text x="1114.2" y="647.5" font-size="8.5" font-weight="bold" fill="#222" text-anchor="middle">DC</text><text x="1151.2" y="647.5" font-size="8.5" font-weight="bold" fill="#222" text-anchor="middle">DC</text>
<path d="M1087,643.9 H1101.8 M1126.6,643.9 H1138.8 M1163.6,643.9 H1178" stroke="#444" stroke-width="1.2"/>
<text x="1133" y="670.5" font-size="7" fill="#888" text-anchor="middle" letter-spacing="1">MPPT</text>
<rect x="1077.2" y="638.9" width="10" height="10" fill="#0b0bd6" stroke="#0b0bd6" stroke-width="1.2"/>
<rect x="1178.2" y="638.9" width="10" height="10" fill="#cfd6f5" stroke="#7a80d0" stroke-width="1.2"/>
<text x="1133" y="708.0" font-size="8.6" fill="#3a3a3a" stroke="#3a3a3a" stroke-width="0.25" text-anchor="middle">converter</text>
<rect x="990.2" y="710.4" width="101.5" height="101" fill="#ffffff" fill-opacity="0" stroke="#d6a6da" stroke-width="1.3"/>
<circle cx="1041.2" cy="760.7" r="30.7" fill="#fff" stroke="#444" stroke-width="1.3"/>
<path d="M1022.1,749.7 L1015.2,745.7" stroke="#444" stroke-width="1.3"/>
<path d="M1030.2,741.6 L1026.2,734.7" stroke="#444" stroke-width="1.3"/>
<path d="M1041.2,738.7 L1041.2,730.7" stroke="#444" stroke-width="1.3"/>
<path d="M1052.2,741.6 L1056.2,734.7" stroke="#444" stroke-width="1.3"/>
<path d="M1060.3,749.7 L1067.2,745.7" stroke="#444" stroke-width="1.3"/>
<path d="M1041.2,760.7 L1046.5,739" stroke="#222" stroke-width="1.3"/><path d="M1043,741 l5,-6 l2,8 z" fill="#111"/><circle cx="1041.2" cy="760.7" r="1.5" fill="#111"/>
<text x="1041.2" y="785" font-size="9" fill="#333" text-anchor="middle">A</text>
<path d="M995,760.7 H1010.5 M1072,760.7 H1087 M1041.2,791.4 V806" stroke="#555" stroke-width="1.2"/>
<path d="M1036,806 H1046.4 L1041.2,815 Z" fill="#fff" stroke="#8a8a8a" stroke-width="1"/>
<rect x="985.2" y="755.7" width="10" height="10" fill="#0b0bd6" stroke="#0b0bd6" stroke-width="1.2"/>
<rect x="1086.7" y="755.7" width="10" height="10" fill="#cfd6f5" stroke="#7a80d0" stroke-width="1.2"/>
<text x="1041.2" y="824.5" font-size="8.6" fill="#3a3a3a" stroke="#3a3a3a" stroke-width="0.25" text-anchor="middle">isensor</text>
</g>
<g filter="url(#tbshadow)"><rect x="461" y="97" width="715" height="101" rx="17" fill="#ffffff" stroke="#e6e9f2" stroke-width="1.2"/></g>
<g fill="none" stroke="#5453a6" stroke-width="2.4" stroke-linecap="round"><circle cx="506" cy="145" r="12"/><path d="M514.5,153.5 L522.5,161.5" stroke-width="3.2"/><circle cx="605" cy="145" r="12"/><path d="M613.5,153.5 L621.5,161.5" stroke-width="3.2"/><path d="M599,145 H611 M605,139 V151"/><circle cx="679" cy="145" r="12"/><path d="M687.5,153.5 L695.5,161.5" stroke-width="3.2"/><path d="M673,145 H685"/><path d="M739,141 H748 V132 M771,141 H762 V132 M739,154 H748 V163 M771,154 H762 V163"/><path d="M854,135 V160 M841.5,147.5 H866.5"/><path d="M937,138 H968 M937,148 H968 M937,158 H968"/></g>
<g fill="#fff" stroke="#5453a6" stroke-width="2.2"><circle cx="961" cy="137.5" r="4.2"/><circle cx="946" cy="148" r="4.2"/><circle cx="961" cy="158.5" r="4.2"/></g>
<g fill="none" stroke="#5453a6" stroke-width="2.4" stroke-linejoin="round"><rect x="1037" y="133.5" width="9" height="19" rx="1.5"/><rect x="1051" y="133.5" width="13" height="12" rx="1.5"/><rect x="1051" y="151" width="13" height="6" rx="1.5"/><rect x="1037" y="158" width="6" height="6" rx="1"/></g>
<g fill="none" stroke="#9a9a9a" stroke-width="2" stroke-linecap="round"><path d="M1114,142 q0,-8 11.8,-8 q11.8,0 11.8,8 v10 q0,11 -11.8,11 q-11.8,0 -11.8,-11 z"/><path d="M1125.8,142 V163 M1114,142 H1137.6 M1118,134 l-3,-4 M1133.6,134 l3,-4 M1114,148 h-5 M1137.6,148 h5 M1114,156 h-5 M1137.6,156 h5"/></g>
<g stroke="#d8d8e0" stroke-width="1.5"><path d="M559.4,129 V167 M805.4,129 V167 M904,129 V167 M1002.8,129 V167"/></g>
<defs>
<filter id="grain" x="0" y="0" width="1" height="1" filterUnits="objectBoundingBox" color-interpolation-filters="sRGB"><feTurbulence type="fractalNoise" baseFrequency="0.85" numOctaves="2" seed="5" result="n"/><feColorMatrix in="n" type="matrix" values="0 0 0 0 0.92  0 0 0 0 0.9  0 0 0 0 0.95  1.8 0 0 0 -1.02"/></filter>
<filter id="grain2" x="0" y="0" width="1" height="1" filterUnits="objectBoundingBox" color-interpolation-filters="sRGB"><feTurbulence type="turbulence" baseFrequency="0.5" numOctaves="1" seed="11" result="n"/><feColorMatrix in="n" type="matrix" values="0 0 0 0 1  0 0 0 0 1  0 0 0 0 1  5 0 0 0 -3.75"/></filter>
<radialGradient id="haze1" cx="0.5" cy="0.5" r="0.5"><stop offset="0" stop-color="#7a6f95" stop-opacity="0.28"/><stop offset="1" stop-color="#7a6f95" stop-opacity="0"/></radialGradient>
<radialGradient id="earthshade" cx="0.5" cy="0.5" r="0.5"><stop offset="0.85" stop-color="#000" stop-opacity="0"/><stop offset="1" stop-color="#000" stop-opacity="0.35"/></radialGradient>
<clipPath id="earthclip"><circle cx="2058.4" cy="380.8" r="175"/></clipPath>
<clipPath id="starclip"><rect x="1572" y="82" width="977" height="598"/></clipPath>
<clipPath id="chartclip"><rect x="1572" y="740" width="985" height="90"/></clipPath>
<linearGradient id="gmaskg" x1="0" y1="0" x2="0" y2="1"><stop offset="0" stop-color="#fff"/><stop offset="0.35" stop-color="#aaa"/><stop offset="1" stop-color="#777"/></linearGradient>
<mask id="gmask"><rect x="1572" y="82" width="977" height="598" fill="url(#gmaskg)"/></mask>
<filter id="mottle" x="0" y="0" width="1" height="1" filterUnits="objectBoundingBox" color-interpolation-filters="sRGB"><feTurbulence type="fractalNoise" baseFrequency="0.14" numOctaves="3" seed="8" result="n"/><feColorMatrix in="n" type="matrix" values="0 0 0 0 0.1  0 0 0 0 0.08  0 0 0 0 0.05  0 0 0 -1.6 1.0"/></filter>
<clipPath id="landclip"><path d="M1923,344 L1922,322 L1938,312 L1950,306 L1953,298 L1965,300 L1975,290 L1985,280 L1990,262 L2010,255 L2040,262 L2050,270 L2090,266 L2110,250 L2125,232 L2120,214 L2150,215 L2180,235 L2205,262 L2225,300 L2236,340 L2240,380 L2236,420 L2229,440 L2225,430 L2215,408 L2201,401 L2185,435 L2177,456 L2158,424 L2136,412 L2101,413 L2096,418 L2080,405 L2073,400 L2057,392 L2055,380 L2035,375 L2022,372 L2015,360 L2005,368 L2003,358 L1995,342 L1988,330 L1992,345 L1986,360 L1980,352 L1972,340 L1965,328 L1955,332 L1940,338 L1930,344 Z M1889,360 L1900,352 L1920,346 L1940,348 L1956,352 L1966,365 L1976,386 L2010,397 L2023,390 L2027,392 L2040,420 L2054,464 L2084,468 L2077,485 L2050,505 L2043,532 L2027,545 L2010,545 L1969,532 L1956,511 L1935,464 L1915,448 L1895,430 L1886,397 Z M2027,392 L2055,392 L2073,402 L2080,410 L2096,420 L2115,427 L2101,454 L2084,464 L2055,462 L2040,420 Z"/></clipPath>
</defs>
<rect x="1572" y="82" width="977" height="598" fill="#0d0b0e"/>
<g clip-path="url(#starclip)">
<linearGradient id="topHaze" x1="0" y1="0" x2="0" y2="1"><stop offset="0" stop-color="#8a8298" stop-opacity="0.20"/><stop offset="0.15" stop-color="#8a8298" stop-opacity="0.10"/><stop offset="0.4" stop-color="#8a8298" stop-opacity="0.02"/><stop offset="0.6" stop-color="#8a8298" stop-opacity="0"/></linearGradient>
<rect x="1572" y="82" width="977" height="598" fill="url(#topHaze)"/>
<g mask="url(#gmask)"><rect x="1572" y="82" width="977" height="598" fill="#fff" filter="url(#grain)"/></g>
<rect x="1572" y="82" width="977" height="598" fill="#fff" filter="url(#grain2)"/>
<g fill="#ffffff"><circle cx="1734" cy="494" r="1.1" fill-opacity="0.34"/><circle cx="2395" cy="672" r="0.8" fill-opacity="0.56"/><circle cx="1804" cy="86" r="0.7" fill-opacity="0.81"/><circle cx="1991" cy="170" r="0.6" fill-opacity="0.81"/><circle cx="2249" cy="343" r="1.1" fill-opacity="0.54"/><circle cx="2505" cy="405" r="1.1" fill-opacity="0.27"/><circle cx="2500" cy="303" r="0.6" fill-opacity="0.53"/><circle cx="1660" cy="564" r="0.5" fill-opacity="0.41"/><circle cx="2046" cy="195" r="0.5" fill-opacity="0.56"/><circle cx="2372" cy="128" r="0.6" fill-opacity="0.41"/><circle cx="2517" cy="615" r="0.9" fill-opacity="0.63"/><circle cx="1643" cy="417" r="0.9" fill-opacity="0.57"/><circle cx="1770" cy="632" r="0.9" fill-opacity="0.39"/><circle cx="1949" cy="675" r="0.8" fill-opacity="0.33"/><circle cx="2386" cy="178" r="1.1" fill-opacity="0.85"/><circle cx="1790" cy="446" r="0.9" fill-opacity="0.63"/><circle cx="1684" cy="482" r="1.1" fill-opacity="0.37"/><circle cx="2476" cy="290" r="0.9" fill-opacity="0.61"/><circle cx="1813" cy="184" r="0.6" fill-opacity="0.73"/><circle cx="2232" cy="618" r="0.6" fill-opacity="0.39"/><circle cx="2536" cy="655" r="0.9" fill-opacity="0.23"/><circle cx="2223" cy="640" r="0.6" fill-opacity="0.29"/><circle cx="1641" cy="562" r="1.1" fill-opacity="0.42"/><circle cx="2388" cy="115" r="0.7" fill-opacity="0.66"/><circle cx="1608" cy="232" r="0.8" fill-opacity="0.34"/><circle cx="1903" cy="618" r="0.6" fill-opacity="0.53"/><circle cx="2507" cy="396" r="1.1" fill-opacity="0.42"/><circle cx="2501" cy="618" r="0.7" fill-opacity="0.55"/><circle cx="2432" cy="441" r="0.8" fill-opacity="0.42"/><circle cx="2452" cy="367" r="0.6" fill-opacity="0.45"/><circle cx="1843" cy="540" r="0.5" fill-opacity="0.38"/><circle cx="1696" cy="509" r="0.7" fill-opacity="0.47"/><circle cx="2200" cy="590" r="0.9" fill-opacity="0.40"/><circle cx="2239" cy="530" r="0.6" fill-opacity="0.28"/><circle cx="1666" cy="140" r="0.5" fill-opacity="0.65"/><circle cx="2339" cy="127" r="0.5" fill-opacity="0.66"/><circle cx="1697" cy="404" r="0.7" fill-opacity="0.39"/><circle cx="2438" cy="453" r="0.6" fill-opacity="0.30"/><circle cx="2109" cy="111" r="1.1" fill-opacity="0.58"/><circle cx="2299" cy="118" r="0.5" fill-opacity="0.51"/><circle cx="2415" cy="320" r="0.9" fill-opacity="0.30"/><circle cx="2266" cy="234" r="1.1" fill-opacity="0.63"/><circle cx="2300" cy="229" r="0.6" fill-opacity="0.47"/><circle cx="2450" cy="259" r="0.9" fill-opacity="0.56"/><circle cx="2105" cy="120" r="0.9" fill-opacity="0.70"/><circle cx="2515" cy="268" r="1.1" fill-opacity="0.48"/><circle cx="2311" cy="197" r="0.9" fill-opacity="0.75"/><circle cx="2524" cy="295" r="0.7" fill-opacity="0.50"/><circle cx="1983" cy="600" r="1.1" fill-opacity="0.26"/><circle cx="2366" cy="535" r="0.8" fill-opacity="0.43"/><circle cx="2495" cy="488" r="1.1" fill-opacity="0.41"/><circle cx="1965" cy="218" r="0.5" fill-opacity="0.66"/><circle cx="1615" cy="248" r="0.9" fill-opacity="0.75"/><circle cx="2278" cy="355" r="0.6" fill-opacity="0.39"/><circle cx="1893" cy="219" r="1.1" fill-opacity="0.35"/><circle cx="2272" cy="613" r="0.8" fill-opacity="0.48"/><circle cx="2312" cy="481" r="0.9" fill-opacity="0.51"/><circle cx="2239" cy="230" r="0.8" fill-opacity="0.51"/><circle cx="2172" cy="574" r="1.1" fill-opacity="0.63"/><circle cx="1580" cy="270" r="0.7" fill-opacity="0.59"/><circle cx="2271" cy="138" r="0.6" fill-opacity="0.34"/><circle cx="1868" cy="644" r="1.1" fill-opacity="0.53"/><circle cx="2530" cy="673" r="0.6" fill-opacity="0.52"/><circle cx="1774" cy="283" r="1.1" fill-opacity="0.46"/><circle cx="1758" cy="133" r="0.5" fill-opacity="0.48"/><circle cx="1821" cy="586" r="0.6" fill-opacity="0.60"/><circle cx="2244" cy="509" r="0.6" fill-opacity="0.61"/><circle cx="1744" cy="312" r="0.7" fill-opacity="0.27"/><circle cx="2523" cy="212" r="0.7" fill-opacity="0.75"/><circle cx="2484" cy="503" r="0.5" fill-opacity="0.26"/><circle cx="2538" cy="643" r="0.6" fill-opacity="0.26"/><circle cx="1875" cy="354" r="0.5" fill-opacity="0.38"/><circle cx="1705" cy="554" r="0.8" fill-opacity="0.44"/><circle cx="1622" cy="195" r="0.8" fill-opacity="0.79"/><circle cx="1812" cy="425" r="0.9" fill-opacity="0.61"/><circle cx="2434" cy="94" r="0.9" fill-opacity="0.34"/><circle cx="1998" cy="579" r="1.1" fill-opacity="0.30"/><circle cx="1632" cy="568" r="0.9" fill-opacity="0.45"/><circle cx="2232" cy="175" r="0.6" fill-opacity="0.49"/><circle cx="1864" cy="457" r="0.5" fill-opacity="0.50"/><circle cx="1755" cy="142" r="0.6" fill-opacity="0.50"/><circle cx="1917" cy="180" r="0.9" fill-opacity="0.57"/><circle cx="2236" cy="472" r="0.6" fill-opacity="0.24"/><circle cx="1800" cy="297" r="0.7" fill-opacity="0.39"/><circle cx="2246" cy="516" r="0.9" fill-opacity="0.40"/><circle cx="1890" cy="214" r="0.9" fill-opacity="0.32"/><circle cx="2185" cy="187" r="1.1" fill-opacity="0.50"/><circle cx="2040" cy="597" r="0.8" fill-opacity="0.56"/><circle cx="2456" cy="488" r="0.6" fill-opacity="0.51"/><circle cx="2161" cy="150" r="0.7" fill-opacity="0.51"/><circle cx="2490" cy="640" r="0.7" fill-opacity="0.23"/><circle cx="2165" cy="533" r="1.1" fill-opacity="0.53"/><circle cx="1751" cy="663" r="0.9" fill-opacity="0.59"/><circle cx="1775" cy="677" r="0.9" fill-opacity="0.34"/><circle cx="2503" cy="625" r="0.6" fill-opacity="0.39"/><circle cx="1747" cy="405" r="0.7" fill-opacity="0.46"/><circle cx="2541" cy="626" r="0.9" fill-opacity="0.54"/><circle cx="2532" cy="524" r="1.1" fill-opacity="0.27"/><circle cx="2477" cy="395" r="0.9" fill-opacity="0.35"/><circle cx="1731" cy="477" r="0.9" fill-opacity="0.49"/><circle cx="2324" cy="530" r="1.1" fill-opacity="0.31"/><circle cx="1753" cy="575" r="0.6" fill-opacity="0.43"/><circle cx="1832" cy="403" r="0.8" fill-opacity="0.31"/><circle cx="2342" cy="284" r="0.8" fill-opacity="0.56"/><circle cx="2291" cy="518" r="0.6" fill-opacity="0.38"/><circle cx="1957" cy="86" r="1.1" fill-opacity="0.78"/><circle cx="1863" cy="578" r="0.8" fill-opacity="0.31"/><circle cx="1795" cy="520" r="0.8" fill-opacity="0.50"/><circle cx="1600" cy="628" r="0.6" fill-opacity="0.43"/><circle cx="2248" cy="598" r="0.5" fill-opacity="0.38"/><circle cx="1818" cy="548" r="0.5" fill-opacity="0.61"/><circle cx="1767" cy="588" r="0.5" fill-opacity="0.53"/><circle cx="1816" cy="161" r="0.7" fill-opacity="0.36"/><circle cx="2074" cy="164" r="1.1" fill-opacity="0.57"/><circle cx="1605" cy="619" r="1.1" fill-opacity="0.44"/><circle cx="1583" cy="585" r="0.7" fill-opacity="0.25"/><circle cx="2252" cy="330" r="0.5" fill-opacity="0.54"/><circle cx="2543" cy="222" r="1.1" fill-opacity="0.54"/><circle cx="2061" cy="656" r="0.7" fill-opacity="0.40"/><circle cx="1595" cy="649" r="0.6" fill-opacity="0.37"/><circle cx="2309" cy="462" r="0.8" fill-opacity="0.52"/><circle cx="1800" cy="590" r="0.8" fill-opacity="0.57"/><circle cx="2328" cy="620" r="1.1" fill-opacity="0.26"/><circle cx="2051" cy="182" r="0.7" fill-opacity="0.48"/><circle cx="1893" cy="212" r="0.5" fill-opacity="0.55"/><circle cx="1770" cy="90" r="0.6" fill-opacity="0.77"/><circle cx="1789" cy="150" r="0.9" fill-opacity="0.65"/><circle cx="2186" cy="157" r="0.5" fill-opacity="0.41"/><circle cx="2255" cy="404" r="0.5" fill-opacity="0.55"/><circle cx="1788" cy="421" r="0.6" fill-opacity="0.31"/><circle cx="2135" cy="570" r="0.9" fill-opacity="0.51"/><circle cx="2365" cy="321" r="0.7" fill-opacity="0.56"/><circle cx="2242" cy="609" r="0.8" fill-opacity="0.24"/><circle cx="2059" cy="614" r="0.9" fill-opacity="0.42"/><circle cx="1611" cy="464" r="0.7" fill-opacity="0.55"/><circle cx="2274" cy="399" r="0.6" fill-opacity="0.34"/><circle cx="1831" cy="628" r="0.7" fill-opacity="0.25"/><circle cx="1854" cy="138" r="0.7" fill-opacity="0.75"/><circle cx="1708" cy="512" r="0.7" fill-opacity="0.35"/><circle cx="1683" cy="477" r="0.8" fill-opacity="0.60"/><circle cx="1622" cy="527" r="0.8" fill-opacity="0.44"/><circle cx="1677" cy="662" r="0.6" fill-opacity="0.45"/><circle cx="1928" cy="202" r="0.8" fill-opacity="0.64"/><circle cx="2324" cy="95" r="0.9" fill-opacity="0.41"/><circle cx="1605" cy="211" r="0.7" fill-opacity="0.31"/><circle cx="2327" cy="589" r="0.8" fill-opacity="0.33"/><circle cx="1919" cy="586" r="0.6" fill-opacity="0.34"/><circle cx="2152" cy="578" r="1.1" fill-opacity="0.38"/><circle cx="1713" cy="303" r="1.1" fill-opacity="0.29"/><circle cx="2235" cy="543" r="1.1" fill-opacity="0.53"/><circle cx="1650" cy="119" r="1.1" fill-opacity="0.85"/><circle cx="1893" cy="310" r="0.6" fill-opacity="0.52"/><circle cx="1601" cy="427" r="0.7" fill-opacity="0.31"/><circle cx="2532" cy="539" r="0.6" fill-opacity="0.55"/><circle cx="2423" cy="615" r="0.8" fill-opacity="0.63"/><circle cx="2074" cy="660" r="1.1" fill-opacity="0.60"/><circle cx="1944" cy="636" r="0.6" fill-opacity="0.44"/><circle cx="1621" cy="508" r="0.5" fill-opacity="0.29"/><circle cx="1682" cy="365" r="0.5" fill-opacity="0.49"/><circle cx="1682" cy="387" r="0.7" fill-opacity="0.49"/><circle cx="2423" cy="257" r="0.8" fill-opacity="0.62"/><circle cx="1579" cy="327" r="0.7" fill-opacity="0.42"/><circle cx="2457" cy="608" r="0.7" fill-opacity="0.57"/><circle cx="1705" cy="289" r="1.1" fill-opacity="0.37"/><circle cx="2189" cy="570" r="0.7" fill-opacity="0.55"/><circle cx="1731" cy="659" r="0.5" fill-opacity="0.29"/><circle cx="1911" cy="211" r="0.5" fill-opacity="0.32"/><circle cx="1602" cy="277" r="1.1" fill-opacity="0.45"/><circle cx="2401" cy="587" r="0.9" fill-opacity="0.52"/><circle cx="2165" cy="202" r="0.6" fill-opacity="0.81"/><circle cx="1874" cy="234" r="0.6" fill-opacity="0.70"/><circle cx="1948" cy="556" r="0.7" fill-opacity="0.53"/><circle cx="2284" cy="229" r="0.7" fill-opacity="0.43"/><circle cx="2373" cy="541" r="0.6" fill-opacity="0.64"/><circle cx="1655" cy="657" r="0.8" fill-opacity="0.42"/><circle cx="2248" cy="550" r="0.6" fill-opacity="0.52"/><circle cx="2000" cy="114" r="0.8" fill-opacity="0.80"/><circle cx="1656" cy="509" r="0.8" fill-opacity="0.60"/><circle cx="2482" cy="569" r="0.5" fill-opacity="0.48"/><circle cx="1583" cy="539" r="0.7" fill-opacity="0.44"/><circle cx="2276" cy="85" r="0.5" fill-opacity="0.78"/><circle cx="2534" cy="654" r="0.5" fill-opacity="0.46"/><circle cx="2304" cy="195" r="0.7" fill-opacity="0.65"/><circle cx="2520" cy="263" r="0.6" fill-opacity="0.29"/><circle cx="1829" cy="293" r="0.9" fill-opacity="0.53"/><circle cx="2461" cy="465" r="0.6" fill-opacity="0.41"/><circle cx="1809" cy="411" r="0.7" fill-opacity="0.54"/><circle cx="2241" cy="271" r="0.9" fill-opacity="0.47"/><circle cx="1797" cy="617" r="0.7" fill-opacity="0.31"/><circle cx="1749" cy="405" r="0.6" fill-opacity="0.26"/><circle cx="2278" cy="242" r="0.8" fill-opacity="0.53"/><circle cx="1824" cy="598" r="1.1" fill-opacity="0.56"/><circle cx="2460" cy="588" r="0.9" fill-opacity="0.62"/><circle cx="1772" cy="403" r="1.1" fill-opacity="0.23"/><circle cx="2323" cy="385" r="1.1" fill-opacity="0.32"/><circle cx="2239" cy="485" r="0.7" fill-opacity="0.48"/><circle cx="1749" cy="198" r="1.1" fill-opacity="0.46"/><circle cx="1941" cy="201" r="1.1" fill-opacity="0.66"/><circle cx="1828" cy="512" r="1.1" fill-opacity="0.58"/><circle cx="2444" cy="119" r="0.7" fill-opacity="0.44"/><circle cx="2509" cy="399" r="0.9" fill-opacity="0.25"/><circle cx="2235" cy="652" r="0.6" fill-opacity="0.58"/><circle cx="1675" cy="473" r="0.6" fill-opacity="0.30"/><circle cx="2086" cy="630" r="0.9" fill-opacity="0.26"/><circle cx="2505" cy="588" r="0.8" fill-opacity="0.57"/><circle cx="2127" cy="192" r="0.8" fill-opacity="0.51"/><circle cx="1868" cy="551" r="0.6" fill-opacity="0.29"/><circle cx="2485" cy="310" r="1.1" fill-opacity="0.41"/><circle cx="1967" cy="656" r="0.7" fill-opacity="0.27"/><circle cx="2226" cy="467" r="0.6" fill-opacity="0.27"/><circle cx="2528" cy="108" r="0.8" fill-opacity="0.74"/><circle cx="2285" cy="246" r="1.1" fill-opacity="0.80"/><circle cx="1626" cy="539" r="0.9" fill-opacity="0.46"/><circle cx="1717" cy="391" r="0.5" fill-opacity="0.36"/><circle cx="1673" cy="321" r="1.1" fill-opacity="0.41"/><circle cx="2175" cy="118" r="0.6" fill-opacity="0.65"/><circle cx="1627" cy="556" r="1.1" fill-opacity="0.46"/><circle cx="1809" cy="241" r="0.9" fill-opacity="0.74"/><circle cx="1989" cy="548" r="1.1" fill-opacity="0.55"/><circle cx="2494" cy="621" r="0.6" fill-opacity="0.35"/><circle cx="2392" cy="253" r="0.7" fill-opacity="0.51"/><circle cx="1599" cy="459" r="0.7" fill-opacity="0.25"/><circle cx="1688" cy="380" r="1.1" fill-opacity="0.42"/><circle cx="2343" cy="662" r="0.7" fill-opacity="0.39"/><circle cx="2086" cy="129" r="0.6" fill-opacity="0.40"/><circle cx="2304" cy="130" r="0.7" fill-opacity="0.65"/><circle cx="2090" cy="658" r="0.9" fill-opacity="0.39"/><circle cx="1677" cy="391" r="0.6" fill-opacity="0.26"/><circle cx="2175" cy="646" r="1.1" fill-opacity="0.62"/><circle cx="1795" cy="248" r="0.6" fill-opacity="0.31"/><circle cx="2205" cy="204" r="0.7" fill-opacity="0.63"/><circle cx="2126" cy="635" r="0.7" fill-opacity="0.57"/><circle cx="2378" cy="628" r="0.5" fill-opacity="0.51"/><circle cx="2385" cy="229" r="0.8" fill-opacity="0.74"/><circle cx="1986" cy="121" r="0.8" fill-opacity="0.71"/><circle cx="1839" cy="96" r="0.6" fill-opacity="0.32"/><circle cx="2046" cy="649" r="0.8" fill-opacity="0.35"/><circle cx="2261" cy="506" r="0.5" fill-opacity="0.46"/><circle cx="1837" cy="457" r="0.5" fill-opacity="0.33"/><circle cx="1883" cy="193" r="0.5" fill-opacity="0.37"/><circle cx="2155" cy="184" r="0.5" fill-opacity="0.76"/><circle cx="2072" cy="180" r="0.9" fill-opacity="0.59"/><circle cx="2343" cy="665" r="0.7" fill-opacity="0.40"/><circle cx="2195" cy="136" r="0.9" fill-opacity="0.49"/><circle cx="1818" cy="373" r="1.1" fill-opacity="0.53"/><circle cx="1902" cy="84" r="0.8" fill-opacity="0.69"/><circle cx="2138" cy="85" r="0.5" fill-opacity="0.56"/><circle cx="1826" cy="629" r="0.6" fill-opacity="0.30"/><circle cx="2381" cy="167" r="1.1" fill-opacity="0.62"/><circle cx="2382" cy="204" r="0.7" fill-opacity="0.77"/><circle cx="1879" cy="598" r="0.6" fill-opacity="0.49"/><circle cx="1849" cy="483" r="0.7" fill-opacity="0.35"/><circle cx="1949" cy="207" r="0.9" fill-opacity="0.40"/><circle cx="2399" cy="286" r="0.9" fill-opacity="0.24"/><circle cx="2337" cy="230" r="0.7" fill-opacity="0.65"/><circle cx="2203" cy="271" r="0.6" fill-opacity="0.45"/><circle cx="2297" cy="113" r="0.5" fill-opacity="0.74"/><circle cx="1727" cy="484" r="0.8" fill-opacity="0.57"/><circle cx="1724" cy="657" r="0.8" fill-opacity="0.40"/><circle cx="2202" cy="172" r="0.9" fill-opacity="0.60"/><circle cx="1906" cy="155" r="0.9" fill-opacity="0.84"/><circle cx="2485" cy="253" r="0.5" fill-opacity="0.33"/><circle cx="1871" cy="573" r="0.6" fill-opacity="0.25"/><circle cx="1899" cy="516" r="0.7" fill-opacity="0.41"/><circle cx="2531" cy="595" r="0.7" fill-opacity="0.51"/><circle cx="2045" cy="567" r="0.9" fill-opacity="0.30"/><circle cx="2161" cy="229" r="0.9" fill-opacity="0.57"/><circle cx="1648" cy="609" r="0.8" fill-opacity="0.54"/><circle cx="2410" cy="411" r="0.8" fill-opacity="0.38"/><circle cx="1881" cy="202" r="0.7" fill-opacity="0.61"/><circle cx="2370" cy="393" r="0.7" fill-opacity="0.38"/><circle cx="2233" cy="557" r="0.9" fill-opacity="0.49"/><circle cx="1743" cy="534" r="0.8" fill-opacity="0.35"/><circle cx="1686" cy="537" r="0.6" fill-opacity="0.51"/><circle cx="2278" cy="102" r="0.6" fill-opacity="0.68"/><circle cx="2474" cy="126" r="0.9" fill-opacity="0.67"/><circle cx="1728" cy="205" r="0.8" fill-opacity="0.31"/><circle cx="1651" cy="613" r="0.8" fill-opacity="0.39"/><circle cx="1608" cy="371" r="0.8" fill-opacity="0.60"/><circle cx="1767" cy="548" r="0.5" fill-opacity="0.63"/><circle cx="1910" cy="548" r="0.7" fill-opacity="0.55"/><circle cx="2466" cy="535" r="0.9" fill-opacity="0.26"/><circle cx="1746" cy="296" r="0.8" fill-opacity="0.25"/><circle cx="2150" cy="539" r="0.9" fill-opacity="0.41"/><circle cx="1871" cy="466" r="0.8" fill-opacity="0.32"/><circle cx="1624" cy="265" r="0.8" fill-opacity="0.49"/><circle cx="2021" cy="130" r="1.1" fill-opacity="0.70"/><circle cx="2188" cy="625" r="0.9" fill-opacity="0.58"/><circle cx="1877" cy="369" r="0.8" fill-opacity="0.59"/><circle cx="2405" cy="302" r="0.6" fill-opacity="0.36"/><circle cx="2513" cy="94" r="1.1" fill-opacity="0.68"/><circle cx="1713" cy="270" r="0.5" fill-opacity="0.41"/><circle cx="1674" cy="292" r="0.6" fill-opacity="0.28"/><circle cx="1754" cy="356" r="1.1" fill-opacity="0.47"/><circle cx="2008" cy="155" r="0.8" fill-opacity="0.61"/><circle cx="1730" cy="106" r="0.7" fill-opacity="0.34"/><circle cx="1652" cy="553" r="1.1" fill-opacity="0.34"/><circle cx="2405" cy="127" r="0.7" fill-opacity="0.43"/><circle cx="2061" cy="638" r="0.6" fill-opacity="0.42"/><circle cx="1635" cy="267" r="0.8" fill-opacity="0.59"/><circle cx="1721" cy="445" r="0.5" fill-opacity="0.49"/><circle cx="1843" cy="411" r="0.6" fill-opacity="0.39"/><circle cx="1728" cy="458" r="0.6" fill-opacity="0.26"/><circle cx="2351" cy="352" r="1.1" fill-opacity="0.41"/><circle cx="2470" cy="651" r="0.7" fill-opacity="0.48"/><circle cx="1836" cy="199" r="1.1" fill-opacity="0.69"/><circle cx="1638" cy="86" r="0.9" fill-opacity="0.49"/><circle cx="1615" cy="360" r="0.5" fill-opacity="0.45"/><circle cx="2068" cy="674" r="0.6" fill-opacity="0.35"/><circle cx="2499" cy="558" r="0.5" fill-opacity="0.37"/><circle cx="2177" cy="645" r="0.8" fill-opacity="0.60"/><circle cx="2526" cy="162" r="0.5" fill-opacity="0.85"/><circle cx="2473" cy="390" r="0.8" fill-opacity="0.56"/><circle cx="1765" cy="559" r="0.7" fill-opacity="0.31"/><circle cx="2453" cy="569" r="0.6" fill-opacity="0.29"/><circle cx="1865" cy="560" r="0.6" fill-opacity="0.46"/><circle cx="2409" cy="375" r="0.5" fill-opacity="0.53"/><circle cx="1693" cy="230" r="0.9" fill-opacity="0.75"/><circle cx="1923" cy="220" r="0.9" fill-opacity="0.62"/><circle cx="2331" cy="480" r="0.8" fill-opacity="0.30"/><circle cx="1947" cy="89" r="0.6" fill-opacity="0.30"/><circle cx="2346" cy="194" r="1.1" fill-opacity="0.45"/><circle cx="2527" cy="170" r="0.6" fill-opacity="0.74"/><circle cx="2243" cy="609" r="0.8" fill-opacity="0.42"/><circle cx="1672" cy="397" r="0.5" fill-opacity="0.63"/><circle cx="1889" cy="626" r="0.8" fill-opacity="0.42"/><circle cx="1851" cy="215" r="0.5" fill-opacity="0.43"/><circle cx="1584" cy="565" r="0.5" fill-opacity="0.24"/><circle cx="2271" cy="355" r="0.9" fill-opacity="0.62"/><circle cx="2466" cy="321" r="0.8" fill-opacity="0.39"/><circle cx="1994" cy="629" r="0.6" fill-opacity="0.29"/><circle cx="2496" cy="148" r="0.6" fill-opacity="0.59"/><circle cx="2149" cy="138" r="0.6" fill-opacity="0.57"/><circle cx="1811" cy="508" r="0.5" fill-opacity="0.52"/><circle cx="1955" cy="643" r="0.6" fill-opacity="0.36"/><circle cx="2236" cy="558" r="0.6" fill-opacity="0.29"/><circle cx="1642" cy="342" r="0.6" fill-opacity="0.23"/><circle cx="1721" cy="634" r="0.5" fill-opacity="0.63"/><circle cx="2515" cy="350" r="0.5" fill-opacity="0.47"/><circle cx="1620" cy="350" r="0.7" fill-opacity="0.54"/><circle cx="2333" cy="153" r="0.9" fill-opacity="0.71"/><circle cx="2464" cy="521" r="0.7" fill-opacity="0.35"/><circle cx="2299" cy="363" r="0.6" fill-opacity="0.60"/><circle cx="1580" cy="560" r="0.7" fill-opacity="0.43"/><circle cx="2263" cy="366" r="0.9" fill-opacity="0.31"/><circle cx="2407" cy="594" r="0.9" fill-opacity="0.47"/><circle cx="2474" cy="616" r="1.1" fill-opacity="0.57"/><circle cx="1836" cy="365" r="1.1" fill-opacity="0.56"/><circle cx="2112" cy="599" r="0.6" fill-opacity="0.31"/><circle cx="1900" cy="135" r="0.7" fill-opacity="0.47"/><circle cx="2104" cy="137" r="0.9" fill-opacity="0.81"/><circle cx="2324" cy="225" r="0.7" fill-opacity="0.57"/><circle cx="1938" cy="564" r="0.9" fill-opacity="0.23"/><circle cx="1658" cy="572" r="0.5" fill-opacity="0.53"/><circle cx="1954" cy="134" r="1.1" fill-opacity="0.56"/><circle cx="2164" cy="574" r="0.8" fill-opacity="0.30"/><circle cx="1631" cy="158" r="0.9" fill-opacity="0.47"/><circle cx="2421" cy="608" r="0.6" fill-opacity="0.37"/><circle cx="1908" cy="146" r="0.5" fill-opacity="0.76"/><circle cx="1626" cy="198" r="0.9" fill-opacity="0.85"/><circle cx="1643" cy="234" r="0.7" fill-opacity="0.68"/><circle cx="2410" cy="129" r="0.8" fill-opacity="0.68"/><circle cx="2450" cy="182" r="0.5" fill-opacity="0.46"/><circle cx="1749" cy="307" r="1.1" fill-opacity="0.28"/><circle cx="2202" cy="536" r="0.8" fill-opacity="0.60"/><circle cx="1708" cy="670" r="0.7" fill-opacity="0.26"/><circle cx="1629" cy="641" r="0.5" fill-opacity="0.51"/><circle cx="2528" cy="177" r="0.8" fill-opacity="0.64"/><circle cx="2220" cy="533" r="0.7" fill-opacity="0.45"/><circle cx="2542" cy="570" r="0.7" fill-opacity="0.23"/><circle cx="1631" cy="383" r="0.5" fill-opacity="0.25"/><circle cx="2519" cy="184" r="0.9" fill-opacity="0.39"/><circle cx="2029" cy="194" r="0.7" fill-opacity="0.58"/><circle cx="2027" cy="622" r="1.1" fill-opacity="0.28"/><circle cx="2231" cy="649" r="1.1" fill-opacity="0.47"/><circle cx="2235" cy="149" r="0.5" fill-opacity="0.75"/><circle cx="1790" cy="137" r="0.9" fill-opacity="0.49"/><circle cx="2294" cy="465" r="1.1" fill-opacity="0.34"/><circle cx="2373" cy="655" r="0.5" fill-opacity="0.28"/><circle cx="2408" cy="289" r="0.6" fill-opacity="0.63"/><circle cx="2506" cy="275" r="0.9" fill-opacity="0.27"/><circle cx="1730" cy="427" r="0.7" fill-opacity="0.25"/><circle cx="2165" cy="94" r="1.1" fill-opacity="0.73"/><circle cx="2232" cy="156" r="0.8" fill-opacity="0.54"/><circle cx="2075" cy="590" r="0.5" fill-opacity="0.31"/><circle cx="2310" cy="631" r="1.1" fill-opacity="0.27"/><circle cx="1735" cy="279" r="0.6" fill-opacity="0.41"/><circle cx="1745" cy="485" r="0.8" fill-opacity="0.41"/><circle cx="1945" cy="163" r="0.8" fill-opacity="0.64"/><circle cx="1706" cy="439" r="0.5" fill-opacity="0.37"/><circle cx="2461" cy="586" r="0.8" fill-opacity="0.47"/><circle cx="1906" cy="215" r="1.1" fill-opacity="0.75"/><circle cx="1759" cy="271" r="0.5" fill-opacity="0.55"/><circle cx="2439" cy="471" r="0.6" fill-opacity="0.50"/><circle cx="2467" cy="203" r="0.8" fill-opacity="0.71"/><circle cx="2296" cy="436" r="1.1" fill-opacity="0.48"/><circle cx="1600" cy="205" r="0.8" fill-opacity="0.39"/><circle cx="1953" cy="604" r="0.8" fill-opacity="0.24"/><circle cx="2492" cy="219" r="1.1" fill-opacity="0.36"/><circle cx="1899" cy="651" r="0.7" fill-opacity="0.34"/><circle cx="2419" cy="534" r="0.6" fill-opacity="0.47"/><circle cx="1681" cy="557" r="0.9" fill-opacity="0.62"/><circle cx="2374" cy="629" r="0.6" fill-opacity="0.41"/><circle cx="2189" cy="596" r="0.9" fill-opacity="0.46"/><circle cx="2282" cy="370" r="0.9" fill-opacity="0.34"/><circle cx="2464" cy="397" r="0.7" fill-opacity="0.31"/><circle cx="2249" cy="597" r="0.9" fill-opacity="0.52"/><circle cx="2501" cy="475" r="0.6" fill-opacity="0.50"/><circle cx="2382" cy="628" r="0.7" fill-opacity="0.61"/><circle cx="2356" cy="365" r="0.5" fill-opacity="0.46"/><circle cx="2468" cy="135" r="1.1" fill-opacity="0.74"/><circle cx="2456" cy="545" r="0.8" fill-opacity="0.55"/><circle cx="1908" cy="242" r="1.1" fill-opacity="0.48"/><circle cx="2079" cy="180" r="0.6" fill-opacity="0.85"/><circle cx="2282" cy="523" r="0.9" fill-opacity="0.41"/><circle cx="2259" cy="509" r="0.8" fill-opacity="0.55"/><circle cx="2061" cy="111" r="0.6" fill-opacity="0.31"/><circle cx="1811" cy="199" r="0.7" fill-opacity="0.57"/><circle cx="1854" cy="184" r="1.1" fill-opacity="0.51"/><circle cx="2244" cy="434" r="1.1" fill-opacity="0.35"/><circle cx="1659" cy="659" r="0.9" fill-opacity="0.58"/><circle cx="1739" cy="581" r="0.9" fill-opacity="0.56"/><circle cx="1877" cy="142" r="0.8" fill-opacity="0.48"/><circle cx="2237" cy="120" r="0.7" fill-opacity="0.83"/><circle cx="1875" cy="373" r="0.8" fill-opacity="0.34"/><circle cx="1839" cy="510" r="0.8" fill-opacity="0.27"/><circle cx="1752" cy="404" r="0.6" fill-opacity="0.31"/><circle cx="1754" cy="122" r="1.1" fill-opacity="0.73"/><circle cx="2176" cy="604" r="0.5" fill-opacity="0.63"/><circle cx="2307" cy="652" r="0.6" fill-opacity="0.44"/><circle cx="1788" cy="538" r="0.6" fill-opacity="0.27"/><circle cx="2067" cy="191" r="0.7" fill-opacity="0.65"/><circle cx="1973" cy="159" r="0.6" fill-opacity="0.69"/><circle cx="1690" cy="217" r="0.6" fill-opacity="0.71"/><circle cx="2132" cy="600" r="0.7" fill-opacity="0.44"/><circle cx="1817" cy="188" r="1.1" fill-opacity="0.77"/><circle cx="1835" cy="255" r="1.1" fill-opacity="0.36"/><circle cx="1633" cy="97" r="0.9" fill-opacity="0.38"/><circle cx="2438" cy="356" r="0.8" fill-opacity="0.32"/><circle cx="2195" cy="244" r="0.6" fill-opacity="0.49"/><circle cx="1720" cy="364" r="0.8" fill-opacity="0.63"/><circle cx="1656" cy="661" r="1.1" fill-opacity="0.53"/><circle cx="2415" cy="323" r="0.6" fill-opacity="0.54"/><circle cx="2406" cy="462" r="0.5" fill-opacity="0.53"/><circle cx="1842" cy="434" r="0.5" fill-opacity="0.49"/><circle cx="1658" cy="304" r="1.1" fill-opacity="0.54"/><circle cx="1893" cy="501" r="0.5" fill-opacity="0.27"/><circle cx="1839" cy="128" r="0.8" fill-opacity="0.46"/><circle cx="1779" cy="407" r="0.5" fill-opacity="0.58"/><circle cx="2533" cy="111" r="0.9" fill-opacity="0.63"/><circle cx="1796" cy="588" r="0.7" fill-opacity="0.34"/><circle cx="1610" cy="654" r="0.7" fill-opacity="0.60"/><circle cx="2220" cy="248" r="0.7" fill-opacity="0.79"/><circle cx="1691" cy="398" r="0.7" fill-opacity="0.57"/><circle cx="2251" cy="577" r="0.9" fill-opacity="0.27"/><circle cx="2414" cy="629" r="0.8" fill-opacity="0.25"/><circle cx="2012" cy="195" r="0.5" fill-opacity="0.49"/><circle cx="2336" cy="364" r="0.8" fill-opacity="0.61"/><circle cx="1662" cy="328" r="0.7" fill-opacity="0.33"/><circle cx="2406" cy="556" r="0.8" fill-opacity="0.56"/><circle cx="1992" cy="166" r="0.5" fill-opacity="0.81"/><circle cx="1678" cy="623" r="0.6" fill-opacity="0.63"/><circle cx="2498" cy="371" r="0.5" fill-opacity="0.27"/><circle cx="2200" cy="658" r="0.6" fill-opacity="0.57"/><circle cx="1728" cy="284" r="0.6" fill-opacity="0.60"/><circle cx="1841" cy="440" r="0.5" fill-opacity="0.33"/><circle cx="2519" cy="351" r="0.5" fill-opacity="0.47"/><circle cx="2412" cy="100" r="0.8" fill-opacity="0.41"/><circle cx="1615" cy="512" r="0.8" fill-opacity="0.46"/><circle cx="2504" cy="468" r="0.6" fill-opacity="0.51"/><circle cx="1828" cy="133" r="1.1" fill-opacity="0.52"/><circle cx="1678" cy="650" r="0.8" fill-opacity="0.63"/><circle cx="1697" cy="193" r="0.8" fill-opacity="0.31"/><circle cx="2284" cy="586" r="0.7" fill-opacity="0.59"/><circle cx="1795" cy="106" r="0.6" fill-opacity="0.34"/><circle cx="1690" cy="111" r="0.9" fill-opacity="0.60"/><circle cx="1589" cy="452" r="0.7" fill-opacity="0.60"/><circle cx="1949" cy="579" r="0.7" fill-opacity="0.26"/><circle cx="2343" cy="412" r="0.7" fill-opacity="0.40"/><circle cx="1724" cy="394" r="0.9" fill-opacity="0.43"/><circle cx="2310" cy="91" r="0.9" fill-opacity="0.80"/><circle cx="2117" cy="143" r="0.9" fill-opacity="0.45"/><circle cx="2514" cy="525" r="0.9" fill-opacity="0.60"/><circle cx="1644" cy="605" r="0.6" fill-opacity="0.29"/><circle cx="1653" cy="360" r="0.5" fill-opacity="0.32"/><circle cx="2355" cy="410" r="0.7" fill-opacity="0.47"/><circle cx="1776" cy="480" r="0.9" fill-opacity="0.43"/><circle cx="2396" cy="230" r="1.1" fill-opacity="0.85"/><circle cx="1615" cy="493" r="0.7" fill-opacity="0.53"/><circle cx="2100" cy="645" r="0.7" fill-opacity="0.24"/><circle cx="1685" cy="379" r="0.8" fill-opacity="0.37"/><circle cx="1816" cy="256" r="1.1" fill-opacity="0.56"/><circle cx="1707" cy="534" r="0.5" fill-opacity="0.54"/><circle cx="1930" cy="132" r="0.7" fill-opacity="0.51"/><circle cx="2522" cy="330" r="1.1" fill-opacity="0.52"/><circle cx="1803" cy="575" r="1.1" fill-opacity="0.43"/><circle cx="1873" cy="633" r="0.6" fill-opacity="0.30"/><circle cx="1837" cy="204" r="0.5" fill-opacity="0.44"/><circle cx="2477" cy="324" r="0.8" fill-opacity="0.56"/><circle cx="2171" cy="559" r="1.1" fill-opacity="0.23"/><circle cx="1920" cy="213" r="1.1" fill-opacity="0.83"/><circle cx="2463" cy="448" r="1.1" fill-opacity="0.57"/><circle cx="1652" cy="562" r="0.5" fill-opacity="0.42"/><circle cx="2500" cy="393" r="0.6" fill-opacity="0.42"/><circle cx="2305" cy="403" r="0.8" fill-opacity="0.23"/><circle cx="1643" cy="360" r="0.8" fill-opacity="0.33"/><circle cx="2541" cy="284" r="0.7" fill-opacity="0.39"/><circle cx="2104" cy="173" r="0.5" fill-opacity="0.45"/><circle cx="2004" cy="558" r="0.5" fill-opacity="0.34"/><circle cx="2332" cy="495" r="1.1" fill-opacity="0.62"/><circle cx="2456" cy="282" r="0.7" fill-opacity="0.61"/><circle cx="1677" cy="297" r="0.6" fill-opacity="0.28"/><circle cx="2324" cy="642" r="0.9" fill-opacity="0.36"/><circle cx="1594" cy="215" r="0.9" fill-opacity="0.63"/><circle cx="2300" cy="220" r="0.8" fill-opacity="0.48"/><circle cx="2148" cy="653" r="0.8" fill-opacity="0.46"/><circle cx="2357" cy="251" r="0.7" fill-opacity="0.51"/><circle cx="1660" cy="561" r="0.5" fill-opacity="0.43"/><circle cx="2468" cy="598" r="0.9" fill-opacity="0.27"/><circle cx="2364" cy="211" r="0.7" fill-opacity="0.75"/><circle cx="2170" cy="663" r="0.7" fill-opacity="0.50"/><circle cx="2054" cy="191" r="0.7" fill-opacity="0.32"/><circle cx="2349" cy="106" r="0.7" fill-opacity="0.59"/><circle cx="1773" cy="144" r="0.9" fill-opacity="0.81"/><circle cx="1759" cy="559" r="0.9" fill-opacity="0.38"/><circle cx="2014" cy="113" r="0.7" fill-opacity="0.69"/><circle cx="1723" cy="506" r="0.9" fill-opacity="0.38"/><circle cx="2218" cy="590" r="0.7" fill-opacity="0.54"/><circle cx="2400" cy="245" r="0.6" fill-opacity="0.32"/><circle cx="1695" cy="209" r="0.6" fill-opacity="0.62"/><circle cx="2359" cy="545" r="0.6" fill-opacity="0.28"/><circle cx="2277" cy="617" r="1.1" fill-opacity="0.46"/><circle cx="2031" cy="162" r="0.6" fill-opacity="0.83"/><circle cx="1868" cy="289" r="0.7" fill-opacity="0.60"/><circle cx="2365" cy="496" r="0.7" fill-opacity="0.33"/><circle cx="2061" cy="636" r="0.7" fill-opacity="0.37"/><circle cx="1948" cy="119" r="0.9" fill-opacity="0.74"/><circle cx="2465" cy="668" r="0.7" fill-opacity="0.54"/><circle cx="2031" cy="655" r="0.5" fill-opacity="0.39"/><circle cx="2454" cy="561" r="0.9" fill-opacity="0.27"/><circle cx="2352" cy="170" r="0.5" fill-opacity="0.57"/><circle cx="2485" cy="154" r="0.5" fill-opacity="0.54"/><circle cx="2468" cy="627" r="1.1" fill-opacity="0.43"/><circle cx="2226" cy="464" r="0.8" fill-opacity="0.61"/><circle cx="1740" cy="180" r="0.8" fill-opacity="0.66"/><circle cx="2518" cy="293" r="0.5" fill-opacity="0.45"/><circle cx="2311" cy="305" r="1.1" fill-opacity="0.58"/><circle cx="2388" cy="135" r="0.8" fill-opacity="0.40"/><circle cx="1969" cy="162" r="0.6" fill-opacity="0.68"/><circle cx="1948" cy="190" r="0.8" fill-opacity="0.51"/><circle cx="2528" cy="388" r="0.7" fill-opacity="0.38"/><circle cx="2386" cy="386" r="0.7" fill-opacity="0.47"/><circle cx="2358" cy="164" r="0.5" fill-opacity="0.79"/><circle cx="2267" cy="597" r="0.9" fill-opacity="0.44"/><circle cx="1707" cy="443" r="0.8" fill-opacity="0.51"/><circle cx="2258" cy="537" r="0.9" fill-opacity="0.44"/><circle cx="2264" cy="498" r="0.5" fill-opacity="0.51"/><circle cx="1782" cy="95" r="1.1" fill-opacity="0.65"/><circle cx="1581" cy="444" r="0.5" fill-opacity="0.24"/><circle cx="2292" cy="484" r="0.8" fill-opacity="0.42"/><circle cx="2469" cy="330" r="0.5" fill-opacity="0.30"/><circle cx="1802" cy="137" r="1.1" fill-opacity="0.66"/><circle cx="2438" cy="636" r="0.7" fill-opacity="0.29"/><circle cx="1867" cy="396" r="0.5" fill-opacity="0.57"/><circle cx="2260" cy="315" r="0.8" fill-opacity="0.51"/><circle cx="2128" cy="662" r="0.6" fill-opacity="0.51"/><circle cx="2505" cy="249" r="0.6" fill-opacity="0.48"/><circle cx="1835" cy="592" r="0.5" fill-opacity="0.32"/><circle cx="2221" cy="97" r="0.6" fill-opacity="0.57"/><circle cx="1971" cy="213" r="0.9" fill-opacity="0.85"/><circle cx="2491" cy="530" r="0.5" fill-opacity="0.62"/><circle cx="2042" cy="96" r="1.1" fill-opacity="0.31"/><circle cx="1587" cy="392" r="1.1" fill-opacity="0.63"/><circle cx="2537" cy="308" r="0.8" fill-opacity="0.59"/><circle cx="2481" cy="136" r="0.9" fill-opacity="0.83"/><circle cx="2501" cy="330" r="0.8" fill-opacity="0.56"/><circle cx="2417" cy="602" r="0.9" fill-opacity="0.50"/><circle cx="2378" cy="176" r="0.8" fill-opacity="0.58"/><circle cx="2218" cy="563" r="0.7" fill-opacity="0.25"/><circle cx="2470" cy="244" r="0.8" fill-opacity="0.47"/><circle cx="2510" cy="495" r="0.9" fill-opacity="0.62"/><circle cx="1920" cy="186" r="0.5" fill-opacity="0.62"/><circle cx="1890" cy="118" r="0.9" fill-opacity="0.51"/><circle cx="2302" cy="167" r="0.5" fill-opacity="0.39"/><circle cx="2530" cy="420" r="1.1" fill-opacity="0.23"/><circle cx="1790" cy="509" r="0.6" fill-opacity="0.52"/><circle cx="2379" cy="132" r="0.7" fill-opacity="0.52"/><circle cx="2337" cy="187" r="0.7" fill-opacity="0.73"/><circle cx="2266" cy="590" r="0.7" fill-opacity="0.27"/><circle cx="2216" cy="622" r="0.5" fill-opacity="0.24"/><circle cx="2325" cy="379" r="0.6" fill-opacity="0.28"/><circle cx="2288" cy="311" r="0.5" fill-opacity="0.23"/><circle cx="2214" cy="610" r="0.9" fill-opacity="0.53"/><circle cx="1815" cy="312" r="1.1" fill-opacity="0.41"/><circle cx="2463" cy="359" r="0.7" fill-opacity="0.32"/><circle cx="1750" cy="602" r="0.7" fill-opacity="0.63"/><circle cx="1819" cy="383" r="0.6" fill-opacity="0.58"/><circle cx="1911" cy="656" r="0.6" fill-opacity="0.48"/><circle cx="1740" cy="181" r="0.9" fill-opacity="0.67"/><circle cx="2329" cy="314" r="0.6" fill-opacity="0.61"/><circle cx="1954" cy="625" r="1.1" fill-opacity="0.27"/><circle cx="1672" cy="95" r="0.7" fill-opacity="0.64"/><circle cx="2324" cy="547" r="0.7" fill-opacity="0.39"/><circle cx="2291" cy="296" r="0.9" fill-opacity="0.26"/><circle cx="2177" cy="104" r="0.9" fill-opacity="0.62"/><circle cx="2301" cy="120" r="1.1" fill-opacity="0.46"/><circle cx="2418" cy="368" r="0.6" fill-opacity="0.40"/><circle cx="1930" cy="571" r="0.6" fill-opacity="0.24"/><circle cx="1843" cy="514" r="0.7" fill-opacity="0.26"/><circle cx="1620" cy="91" r="0.8" fill-opacity="0.72"/><circle cx="2253" cy="578" r="0.6" fill-opacity="0.29"/><circle cx="1814" cy="509" r="0.5" fill-opacity="0.38"/><circle cx="2454" cy="370" r="0.7" fill-opacity="0.23"/><circle cx="2490" cy="498" r="0.6" fill-opacity="0.47"/><circle cx="2443" cy="157" r="1.1" fill-opacity="0.30"/><circle cx="1614" cy="517" r="0.9" fill-opacity="0.56"/><circle cx="2436" cy="273" r="0.8" fill-opacity="0.34"/><circle cx="1727" cy="430" r="0.7" fill-opacity="0.62"/><circle cx="2322" cy="149" r="0.8" fill-opacity="0.50"/><circle cx="2393" cy="429" r="0.7" fill-opacity="0.28"/><circle cx="2450" cy="620" r="1.1" fill-opacity="0.56"/><circle cx="1582" cy="290" r="0.6" fill-opacity="0.50"/><circle cx="2193" cy="217" r="0.8" fill-opacity="0.53"/><circle cx="2478" cy="205" r="1.1" fill-opacity="0.61"/><circle cx="2409" cy="562" r="0.7" fill-opacity="0.36"/><circle cx="2290" cy="615" r="0.5" fill-opacity="0.47"/><circle cx="2415" cy="143" r="1.1" fill-opacity="0.65"/><circle cx="2077" cy="617" r="0.7" fill-opacity="0.61"/><circle cx="2413" cy="387" r="1.1" fill-opacity="0.54"/><circle cx="2510" cy="338" r="0.6" fill-opacity="0.23"/><circle cx="1682" cy="585" r="1.1" fill-opacity="0.42"/><circle cx="2477" cy="440" r="0.8" fill-opacity="0.29"/><circle cx="2523" cy="192" r="0.5" fill-opacity="0.68"/><circle cx="2238" cy="451" r="0.8" fill-opacity="0.46"/><circle cx="2030" cy="565" r="0.5" fill-opacity="0.34"/><circle cx="1577" cy="275" r="0.6" fill-opacity="0.34"/><circle cx="2065" cy="633" r="0.8" fill-opacity="0.35"/><circle cx="1837" cy="551" r="1.1" fill-opacity="0.49"/><circle cx="1603" cy="479" r="0.8" fill-opacity="0.60"/><circle cx="1698" cy="508" r="0.8" fill-opacity="0.33"/><circle cx="1856" cy="665" r="0.6" fill-opacity="0.31"/><circle cx="1608" cy="130" r="0.7" fill-opacity="0.64"/><circle cx="1821" cy="220" r="0.9" fill-opacity="0.57"/><circle cx="2011" cy="178" r="1.1" fill-opacity="0.43"/><circle cx="1774" cy="131" r="0.5" fill-opacity="0.39"/><circle cx="1974" cy="564" r="0.6" fill-opacity="0.48"/><circle cx="1782" cy="553" r="0.5" fill-opacity="0.53"/><circle cx="1589" cy="537" r="0.7" fill-opacity="0.32"/><circle cx="2020" cy="676" r="0.8" fill-opacity="0.46"/><circle cx="2190" cy="623" r="0.5" fill-opacity="0.50"/><circle cx="1608" cy="304" r="0.8" fill-opacity="0.26"/><circle cx="2243" cy="586" r="1.1" fill-opacity="0.24"/><circle cx="1896" cy="588" r="0.5" fill-opacity="0.43"/><circle cx="1702" cy="114" r="1.1" fill-opacity="0.84"/><circle cx="1578" cy="175" r="0.5" fill-opacity="0.58"/><circle cx="2496" cy="581" r="1.1" fill-opacity="0.31"/><circle cx="2361" cy="466" r="0.7" fill-opacity="0.35"/><circle cx="1708" cy="209" r="0.5" fill-opacity="0.69"/><circle cx="1613" cy="416" r="0.5" fill-opacity="0.62"/><circle cx="2323" cy="575" r="0.7" fill-opacity="0.34"/><circle cx="1768" cy="241" r="0.5" fill-opacity="0.35"/><circle cx="1628" cy="214" r="0.7" fill-opacity="0.67"/><circle cx="2153" cy="581" r="0.7" fill-opacity="0.48"/><circle cx="2244" cy="594" r="0.6" fill-opacity="0.59"/><circle cx="1845" cy="583" r="0.8" fill-opacity="0.32"/><circle cx="1716" cy="517" r="1.1" fill-opacity="0.29"/><circle cx="1766" cy="262" r="1.1" fill-opacity="0.63"/><circle cx="1707" cy="565" r="0.8" fill-opacity="0.24"/><circle cx="2198" cy="522" r="0.7" fill-opacity="0.59"/><circle cx="2315" cy="629" r="1.1" fill-opacity="0.38"/><circle cx="1742" cy="623" r="0.8" fill-opacity="0.63"/><circle cx="1945" cy="531" r="1.1" fill-opacity="0.47"/><circle cx="1769" cy="373" r="1.1" fill-opacity="0.52"/><circle cx="2147" cy="190" r="0.6" fill-opacity="0.42"/><circle cx="1586" cy="216" r="0.8" fill-opacity="0.33"/><circle cx="2438" cy="317" r="1.1" fill-opacity="0.57"/><circle cx="2312" cy="346" r="0.9" fill-opacity="0.27"/><circle cx="1930" cy="203" r="0.6" fill-opacity="0.36"/><circle cx="1885" cy="225" r="0.6" fill-opacity="0.50"/><circle cx="1981" cy="158" r="1.1" fill-opacity="0.39"/><circle cx="1603" cy="343" r="0.8" fill-opacity="0.55"/><circle cx="2470" cy="600" r="0.8" fill-opacity="0.25"/><circle cx="2356" cy="611" r="0.7" fill-opacity="0.31"/><circle cx="2411" cy="365" r="0.7" fill-opacity="0.23"/><circle cx="1725" cy="400" r="0.5" fill-opacity="0.42"/><circle cx="1807" cy="434" r="0.5" fill-opacity="0.61"/><circle cx="2114" cy="198" r="0.9" fill-opacity="0.31"/><circle cx="2042" cy="562" r="0.7" fill-opacity="0.54"/><circle cx="2362" cy="466" r="1.1" fill-opacity="0.60"/><circle cx="2529" cy="192" r="1.1" fill-opacity="0.67"/><circle cx="1575" cy="311" r="0.5" fill-opacity="0.48"/><circle cx="2302" cy="434" r="0.6" fill-opacity="0.57"/><circle cx="2115" cy="600" r="0.5" fill-opacity="0.24"/><circle cx="1779" cy="154" r="0.8" fill-opacity="0.71"/><circle cx="1699" cy="173" r="1.1" fill-opacity="0.74"/><circle cx="1616" cy="368" r="0.5" fill-opacity="0.35"/><circle cx="1637" cy="167" r="0.7" fill-opacity="0.48"/><circle cx="1934" cy="616" r="0.5" fill-opacity="0.58"/><circle cx="1929" cy="557" r="0.8" fill-opacity="0.36"/><circle cx="2291" cy="373" r="1.1" fill-opacity="0.54"/><circle cx="1695" cy="455" r="1.1" fill-opacity="0.24"/><circle cx="1941" cy="630" r="0.9" fill-opacity="0.39"/><circle cx="2288" cy="635" r="0.8" fill-opacity="0.28"/><circle cx="1680" cy="219" r="0.7" fill-opacity="0.36"/><circle cx="2433" cy="117" r="0.9" fill-opacity="0.38"/><circle cx="2333" cy="285" r="0.6" fill-opacity="0.49"/><circle cx="1869" cy="157" r="0.9" fill-opacity="0.44"/><circle cx="2259" cy="642" r="0.9" fill-opacity="0.60"/><circle cx="1636" cy="449" r="0.6" fill-opacity="0.39"/><circle cx="1756" cy="154" r="0.7" fill-opacity="0.78"/><circle cx="1816" cy="504" r="0.7" fill-opacity="0.44"/><circle cx="2304" cy="522" r="0.7" fill-opacity="0.30"/><circle cx="1635" cy="667" r="0.7" fill-opacity="0.40"/><circle cx="2254" cy="143" r="0.6" fill-opacity="0.37"/><circle cx="2473" cy="378" r="0.9" fill-opacity="0.39"/><circle cx="2357" cy="288" r="0.5" fill-opacity="0.35"/><circle cx="2371" cy="292" r="0.9" fill-opacity="0.39"/><circle cx="1737" cy="255" r="1.1" fill-opacity="0.25"/><circle cx="1831" cy="242" r="0.7" fill-opacity="0.55"/><circle cx="2037" cy="602" r="0.8" fill-opacity="0.49"/><circle cx="1581" cy="296" r="0.7" fill-opacity="0.34"/><circle cx="2012" cy="568" r="0.7" fill-opacity="0.41"/><circle cx="1860" cy="457" r="0.7" fill-opacity="0.26"/><circle cx="1996" cy="594" r="1.1" fill-opacity="0.60"/><circle cx="1664" cy="288" r="0.8" fill-opacity="0.23"/><circle cx="2190" cy="581" r="0.9" fill-opacity="0.37"/><circle cx="1633" cy="207" r="0.5" fill-opacity="0.65"/><circle cx="2202" cy="643" r="0.5" fill-opacity="0.29"/><circle cx="2323" cy="147" r="1.1" fill-opacity="0.36"/><circle cx="1919" cy="118" r="0.8" fill-opacity="0.42"/><circle cx="1586" cy="506" r="0.6" fill-opacity="0.53"/><circle cx="2351" cy="621" r="0.7" fill-opacity="0.42"/><circle cx="2285" cy="256" r="0.5" fill-opacity="0.61"/><circle cx="2452" cy="107" r="0.9" fill-opacity="0.70"/><circle cx="1577" cy="475" r="0.6" fill-opacity="0.29"/><circle cx="1944" cy="594" r="1.1" fill-opacity="0.46"/><circle cx="1624" cy="325" r="0.6" fill-opacity="0.62"/><circle cx="1999" cy="566" r="1.1" fill-opacity="0.33"/><circle cx="1715" cy="555" r="0.6" fill-opacity="0.50"/><circle cx="2289" cy="484" r="0.9" fill-opacity="0.25"/><circle cx="2326" cy="219" r="0.9" fill-opacity="0.81"/><circle cx="1663" cy="112" r="1.1" fill-opacity="0.50"/><circle cx="1770" cy="482" r="0.6" fill-opacity="0.58"/><circle cx="2430" cy="239" r="0.7" fill-opacity="0.35"/><circle cx="1977" cy="132" r="0.5" fill-opacity="0.36"/><circle cx="1628" cy="280" r="0.8" fill-opacity="0.60"/><circle cx="1956" cy="103" r="1.1" fill-opacity="0.46"/><circle cx="1623" cy="654" r="1.1" fill-opacity="0.36"/><circle cx="2524" cy="423" r="1.1" fill-opacity="0.57"/><circle cx="2411" cy="577" r="0.7" fill-opacity="0.48"/><circle cx="2323" cy="512" r="1.1" fill-opacity="0.58"/><circle cx="2040" cy="673" r="1.1" fill-opacity="0.57"/><circle cx="1869" cy="243" r="0.9" fill-opacity="0.62"/><circle cx="2353" cy="389" r="0.7" fill-opacity="0.58"/><circle cx="2254" cy="332" r="0.9" fill-opacity="0.24"/><circle cx="2339" cy="437" r="0.6" fill-opacity="0.39"/><circle cx="1643" cy="209" r="0.8" fill-opacity="0.55"/><circle cx="1622" cy="438" r="0.6" fill-opacity="0.40"/><circle cx="2316" cy="271" r="0.9" fill-opacity="0.35"/><circle cx="1663" cy="259" r="0.7" fill-opacity="0.57"/><circle cx="2437" cy="362" r="0.9" fill-opacity="0.56"/><circle cx="2535" cy="572" r="0.6" fill-opacity="0.30"/><circle cx="2485" cy="209" r="1.1" fill-opacity="0.57"/><circle cx="1621" cy="552" r="0.9" fill-opacity="0.49"/><circle cx="1878" cy="225" r="1.1" fill-opacity="0.61"/><circle cx="2391" cy="618" r="0.8" fill-opacity="0.62"/><circle cx="2327" cy="554" r="0.5" fill-opacity="0.49"/><circle cx="2240" cy="464" r="0.8" fill-opacity="0.49"/><circle cx="2304" cy="241" r="0.6" fill-opacity="0.67"/><circle cx="2376" cy="284" r="0.6" fill-opacity="0.37"/><circle cx="1663" cy="508" r="0.8" fill-opacity="0.36"/><circle cx="1813" cy="572" r="0.7" fill-opacity="0.49"/><circle cx="1887" cy="158" r="0.7" fill-opacity="0.42"/><circle cx="1841" cy="198" r="0.8" fill-opacity="0.51"/><circle cx="1885" cy="181" r="1.1" fill-opacity="0.85"/><circle cx="2352" cy="313" r="0.7" fill-opacity="0.38"/><circle cx="1837" cy="519" r="0.9" fill-opacity="0.36"/><circle cx="2211" cy="102" r="0.8" fill-opacity="0.47"/><circle cx="2394" cy="173" r="0.6" fill-opacity="0.76"/><circle cx="2013" cy="587" r="0.8" fill-opacity="0.39"/><circle cx="2283" cy="524" r="0.5" fill-opacity="0.36"/><circle cx="2181" cy="585" r="1.1" fill-opacity="0.35"/><circle cx="1836" cy="341" r="0.6" fill-opacity="0.47"/><circle cx="2155" cy="124" r="0.5" fill-opacity="0.49"/><circle cx="1634" cy="114" r="0.5" fill-opacity="0.34"/><circle cx="2299" cy="139" r="0.6" fill-opacity="0.79"/><circle cx="1587" cy="648" r="0.5" fill-opacity="0.38"/><circle cx="2357" cy="658" r="0.6" fill-opacity="0.32"/><circle cx="2142" cy="569" r="0.9" fill-opacity="0.45"/><circle cx="1702" cy="654" r="0.5" fill-opacity="0.30"/><circle cx="2373" cy="173" r="0.7" fill-opacity="0.68"/><circle cx="1726" cy="237" r="0.7" fill-opacity="0.40"/><circle cx="2350" cy="412" r="1.1" fill-opacity="0.62"/><circle cx="2423" cy="405" r="0.8" fill-opacity="0.40"/><circle cx="2062" cy="178" r="0.5" fill-opacity="0.55"/><circle cx="2103" cy="581" r="0.8" fill-opacity="0.49"/><circle cx="1836" cy="472" r="0.8" fill-opacity="0.42"/><circle cx="2098" cy="670" r="0.9" fill-opacity="0.30"/><circle cx="1815" cy="420" r="0.9" fill-opacity="0.34"/><circle cx="1768" cy="387" r="0.5" fill-opacity="0.59"/><circle cx="2383" cy="474" r="1.1" fill-opacity="0.60"/><circle cx="1672" cy="326" r="0.7" fill-opacity="0.35"/><circle cx="2392" cy="338" r="0.8" fill-opacity="0.62"/><circle cx="2121" cy="618" r="0.9" fill-opacity="0.57"/><circle cx="2095" cy="175" r="0.9" fill-opacity="0.75"/><circle cx="2466" cy="675" r="0.9" fill-opacity="0.61"/><circle cx="2002" cy="557" r="0.8" fill-opacity="0.53"/><circle cx="1831" cy="263" r="1.1" fill-opacity="0.49"/><circle cx="1760" cy="167" r="0.9" fill-opacity="0.58"/><circle cx="2364" cy="226" r="1.1" fill-opacity="0.31"/><circle cx="2531" cy="652" r="0.7" fill-opacity="0.23"/><circle cx="1653" cy="530" r="0.9" fill-opacity="0.52"/><circle cx="1887" cy="525" r="0.5" fill-opacity="0.41"/><circle cx="2221" cy="565" r="1.1" fill-opacity="0.42"/><circle cx="1929" cy="118" r="0.7" fill-opacity="0.66"/><circle cx="2218" cy="606" r="0.9" fill-opacity="0.63"/><circle cx="2478" cy="226" r="0.6" fill-opacity="0.46"/><circle cx="1764" cy="348" r="0.5" fill-opacity="0.43"/><circle cx="1591" cy="546" r="0.5" fill-opacity="0.60"/><circle cx="1831" cy="198" r="1.1" fill-opacity="0.42"/><circle cx="1627" cy="296" r="0.5" fill-opacity="0.39"/><circle cx="2266" cy="514" r="0.7" fill-opacity="0.54"/><circle cx="2294" cy="151" r="1.1" fill-opacity="0.30"/><circle cx="2490" cy="473" r="0.9" fill-opacity="0.62"/><circle cx="1651" cy="286" r="0.5" fill-opacity="0.62"/><circle cx="1618" cy="496" r="0.7" fill-opacity="0.28"/><circle cx="2421" cy="233" r="0.5" fill-opacity="0.71"/><circle cx="1821" cy="124" r="0.7" fill-opacity="0.46"/><circle cx="2035" cy="192" r="1.1" fill-opacity="0.63"/><circle cx="2455" cy="365" r="0.7" fill-opacity="0.38"/><circle cx="2272" cy="238" r="0.8" fill-opacity="0.74"/><circle cx="2491" cy="155" r="0.7" fill-opacity="0.74"/><circle cx="1842" cy="251" r="0.7" fill-opacity="0.58"/><circle cx="2179" cy="590" r="0.5" fill-opacity="0.38"/><circle cx="1853" cy="399" r="0.9" fill-opacity="0.34"/><circle cx="2517" cy="533" r="0.7" fill-opacity="0.38"/><circle cx="2358" cy="116" r="0.8" fill-opacity="0.35"/><circle cx="1831" cy="87" r="0.7" fill-opacity="0.45"/><circle cx="1853" cy="597" r="0.8" fill-opacity="0.37"/><circle cx="2499" cy="368" r="0.8" fill-opacity="0.43"/><circle cx="2067" cy="667" r="0.9" fill-opacity="0.40"/><circle cx="1843" cy="604" r="0.6" fill-opacity="0.34"/><circle cx="2253" cy="323" r="0.8" fill-opacity="0.50"/><circle cx="2345" cy="327" r="0.5" fill-opacity="0.23"/><circle cx="2529" cy="495" r="0.9" fill-opacity="0.34"/><circle cx="1818" cy="266" r="0.6" fill-opacity="0.25"/><circle cx="2518" cy="427" r="0.5" fill-opacity="0.32"/><circle cx="1628" cy="606" r="1.1" fill-opacity="0.59"/><circle cx="1765" cy="385" r="0.6" fill-opacity="0.38"/><circle cx="1891" cy="562" r="0.5" fill-opacity="0.45"/><circle cx="1728" cy="97" r="0.9" fill-opacity="0.65"/><circle cx="1787" cy="269" r="0.7" fill-opacity="0.38"/><circle cx="2223" cy="163" r="0.6" fill-opacity="0.32"/><circle cx="1798" cy="565" r="0.5" fill-opacity="0.49"/><circle cx="2262" cy="348" r="0.7" fill-opacity="0.43"/><circle cx="2200" cy="107" r="1.1" fill-opacity="0.30"/><circle cx="2424" cy="497" r="0.6" fill-opacity="0.30"/><circle cx="2295" cy="86" r="0.5" fill-opacity="0.73"/><circle cx="2329" cy="192" r="0.5" fill-opacity="0.82"/><circle cx="2210" cy="100" r="0.7" fill-opacity="0.80"/><circle cx="2278" cy="455" r="1.1" fill-opacity="0.28"/><circle cx="2198" cy="525" r="0.8" fill-opacity="0.35"/><circle cx="2403" cy="439" r="1.1" fill-opacity="0.34"/><circle cx="2286" cy="504" r="0.5" fill-opacity="0.60"/><circle cx="2493" cy="123" r="0.8" fill-opacity="0.47"/><circle cx="1816" cy="316" r="0.8" fill-opacity="0.24"/><circle cx="1745" cy="479" r="0.9" fill-opacity="0.54"/><circle cx="1669" cy="462" r="0.5" fill-opacity="0.60"/><circle cx="2022" cy="90" r="0.9" fill-opacity="0.78"/><circle cx="2293" cy="671" r="0.9" fill-opacity="0.39"/><circle cx="1576" cy="439" r="0.9" fill-opacity="0.49"/><circle cx="1973" cy="199" r="0.8" fill-opacity="0.80"/><circle cx="1797" cy="339" r="0.9" fill-opacity="0.39"/><circle cx="1959" cy="580" r="0.6" fill-opacity="0.56"/><circle cx="1922" cy="550" r="0.8" fill-opacity="0.35"/><circle cx="2521" cy="283" r="1.1" fill-opacity="0.33"/><circle cx="1774" cy="619" r="0.9" fill-opacity="0.47"/><circle cx="1782" cy="561" r="0.6" fill-opacity="0.59"/><circle cx="2251" cy="474" r="0.5" fill-opacity="0.53"/><circle cx="1825" cy="460" r="0.9" fill-opacity="0.45"/><circle cx="2334" cy="535" r="0.5" fill-opacity="0.44"/><circle cx="1847" cy="253" r="0.5" fill-opacity="0.27"/><circle cx="2123" cy="611" r="1.1" fill-opacity="0.50"/><circle cx="1902" cy="119" r="0.9" fill-opacity="0.82"/><circle cx="2211" cy="574" r="0.5" fill-opacity="0.43"/><circle cx="2314" cy="579" r="0.7" fill-opacity="0.61"/><circle cx="1599" cy="558" r="0.5" fill-opacity="0.33"/><circle cx="1986" cy="167" r="0.6" fill-opacity="0.83"/><circle cx="2124" cy="591" r="0.7" fill-opacity="0.43"/><circle cx="2473" cy="317" r="0.6" fill-opacity="0.60"/><circle cx="1758" cy="588" r="0.7" fill-opacity="0.24"/><circle cx="1799" cy="212" r="1.1" fill-opacity="0.82"/><circle cx="1775" cy="313" r="0.7" fill-opacity="0.37"/><circle cx="2475" cy="221" r="0.5" fill-opacity="0.72"/><circle cx="2394" cy="333" r="0.6" fill-opacity="0.50"/><circle cx="1579" cy="357" r="0.7" fill-opacity="0.31"/><circle cx="1788" cy="152" r="1.1" fill-opacity="0.35"/><circle cx="1595" cy="116" r="0.5" fill-opacity="0.50"/><circle cx="1820" cy="662" r="0.7" fill-opacity="0.63"/><circle cx="1656" cy="236" r="0.5" fill-opacity="0.69"/><circle cx="1583" cy="219" r="0.5" fill-opacity="0.68"/><circle cx="2505" cy="286" r="0.7" fill-opacity="0.58"/><circle cx="1719" cy="434" r="1.1" fill-opacity="0.36"/><circle cx="1593" cy="202" r="0.9" fill-opacity="0.79"/><circle cx="1619" cy="575" r="0.8" fill-opacity="0.33"/><circle cx="1803" cy="92" r="0.8" fill-opacity="0.60"/><circle cx="2461" cy="146" r="0.8" fill-opacity="0.58"/><circle cx="2522" cy="544" r="0.5" fill-opacity="0.45"/><circle cx="2460" cy="134" r="0.5" fill-opacity="0.43"/><circle cx="2323" cy="154" r="0.7" fill-opacity="0.69"/><circle cx="2334" cy="204" r="0.7" fill-opacity="0.54"/><circle cx="2504" cy="173" r="0.5" fill-opacity="0.82"/><circle cx="1590" cy="619" r="0.7" fill-opacity="0.36"/><circle cx="1637" cy="510" r="0.6" fill-opacity="0.29"/><circle cx="2383" cy="328" r="0.9" fill-opacity="0.33"/><circle cx="1832" cy="540" r="0.7" fill-opacity="0.41"/><circle cx="2114" cy="575" r="0.8" fill-opacity="0.63"/><circle cx="1782" cy="238" r="0.7" fill-opacity="0.42"/><circle cx="1678" cy="597" r="0.9" fill-opacity="0.59"/><circle cx="1757" cy="356" r="0.8" fill-opacity="0.25"/><circle cx="2112" cy="555" r="0.5" fill-opacity="0.54"/><circle cx="1798" cy="133" r="0.7" fill-opacity="0.76"/><circle cx="1846" cy="175" r="0.5" fill-opacity="0.34"/><circle cx="2424" cy="300" r="1.1" fill-opacity="0.31"/><circle cx="2207" cy="95" r="0.6" fill-opacity="0.57"/><circle cx="1829" cy="617" r="0.8" fill-opacity="0.43"/><circle cx="1778" cy="645" r="0.6" fill-opacity="0.28"/></g>
<ellipse cx="1899.7" cy="279.6" rx="7" ry="2.5" fill="#e8e8ee" opacity="0.8" transform="rotate(-35 1899.7 279.6)"/>
<circle cx="2322" cy="318" r="4" fill="#9aa0dd" opacity="0.35"/>
</g>
<g fill="none" stroke="#ffffff" stroke-width="2.2"><rect x="2518" y="94" width="14" height="19" rx="3"/><path d="M2515,108 V93 q0,-4 4,-4 h9"/></g>
<g clip-path="url(#earthclip)">
<circle cx="2058.4" cy="380.8" r="175" fill="#070a1c"/>
<path d="M1923,344 L1922,322 L1938,312 L1950,306 L1953,298 L1965,300 L1975,290 L1985,280 L1990,262 L2010,255 L2040,262 L2050,270 L2090,266 L2110,250 L2125,232 L2120,214 L2150,215 L2180,235 L2205,262 L2225,300 L2236,340 L2240,380 L2236,420 L2229,440 L2225,430 L2215,408 L2201,401 L2185,435 L2177,456 L2158,424 L2136,412 L2101,413 L2096,418 L2080,405 L2073,400 L2057,392 L2055,380 L2035,375 L2022,372 L2015,360 L2005,368 L2003,358 L1995,342 L1988,330 L1992,345 L1986,360 L1980,352 L1972,340 L1965,328 L1955,332 L1940,338 L1930,344 Z" fill="#94875f"/>
<path d="M1938,312 C1944.7,305.3 1964.7,301.2 1975,300 C1985.3,298.8 1990.8,302.0 2000,305 C2009.2,308.0 2022.5,312.8 2030,318 C2037.5,323.2 2048.3,332.3 2045,336 C2041.7,339.7 2019.2,340.2 2010,340 C2000.8,339.8 1997.5,337.0 1990,335 C1982.5,333.0 1974.2,327.2 1965,328 C1955.8,328.8 1939.5,342.7 1935,340 C1930.5,337.3 1931.3,318.7 1938,312 Z" fill="#6e6d45" opacity="0.85"/>
<path d="M1955,282 L1968,276 L1975,290 L1970,302 L1958,304 L1953,295 Z" fill="#66693f"/>
<path d="M2198,330 C2204.7,323.8 2225.3,325.8 2232,335 C2238.7,344.2 2238.5,367.5 2238,385 C2237.5,402.5 2232.8,436.2 2229,440 C2225.2,443.8 2219.7,414.5 2215,408 C2210.3,401.5 2204.8,407.0 2201,401 C2197.2,395.0 2192.5,383.8 2192,372 C2191.5,360.2 2191.3,336.2 2198,330 Z" fill="#5d6a3b" opacity="0.9"/>
<path d="M2060,330 C2066.7,319.3 2095.0,324.3 2110,326 C2125.0,327.7 2145.0,327.7 2150,340 C2155.0,352.3 2148.3,389.2 2140,400 C2131.7,410.8 2111.7,406.7 2100,405 C2088.3,403.3 2076.7,402.5 2070,390 C2063.3,377.5 2053.3,340.7 2060,330 Z" fill="#a8956c" opacity="0.6"/>
<path d="M1889,360 L1900,352 L1920,346 L1940,348 L1956,352 L1966,365 L1976,386 L2010,397 L2023,390 L2027,392 L2040,420 L2054,464 L2084,468 L2077,485 L2050,505 L2043,532 L2027,545 L2010,545 L1969,532 L1956,511 L1935,464 L1915,448 L1895,430 L1886,397 Z" fill="#c4ab82"/>
<path d="M1905,380 C1912.0,371.7 1935.0,365.5 1950,368 C1965.0,370.5 1982.5,385.5 1995,395 C2007.5,404.5 2019.2,416.7 2025,425 C2030.8,433.3 2035.8,441.2 2030,445 C2024.2,448.8 2004.2,449.7 1990,448 C1975.8,446.3 1958.7,440.0 1945,435 C1931.3,430.0 1914.7,427.2 1908,418 C1901.3,408.8 1898.0,388.3 1905,380 Z" fill="#d6bf97" opacity="0.8"/>
<path d="M1897,435 C1899.0,433.7 1913.7,439.2 1925,442 C1936.3,444.8 1951.7,449.3 1965,452 C1978.3,454.7 1991.2,455.7 2005,458 C2018.8,460.3 2038.5,461.3 2048,466 C2057.5,470.7 2062.3,478.3 2062,486 C2061.7,493.7 2053.8,506.0 2046,512 C2038.2,518.0 2026.3,520.0 2015,522 C2003.7,524.0 1987.5,526.3 1978,524 C1968.5,521.7 1965.2,517.7 1958,508 C1950.8,498.3 1942.5,475.7 1935,466 C1927.5,456.3 1919.3,455.2 1913,450 C1906.7,444.8 1895.0,436.3 1897,435 Z" fill="#566536" opacity="0.92"/>
<path d="M1968,522 C1973.0,519.0 1988.0,514.7 2000,514 C2012.0,513.3 2033.0,515.0 2040,518 C2047.0,521.0 2044.5,527.7 2042,532 C2039.5,536.3 2032.8,541.7 2025,544 C2017.2,546.3 2004.2,548.0 1995,546 C1985.8,544.0 1974.5,536.0 1970,532 C1965.5,528.0 1963.0,525.0 1968,522 Z" fill="#b09a70" opacity="0.9"/>
<path d="M2027,392 L2055,392 L2073,402 L2080,410 L2096,420 L2115,427 L2101,454 L2084,464 L2055,462 L2040,420 Z" fill="#cbb086"/>
<path d="M2022,400 L2054,463" stroke="#070a1c" stroke-width="3"/>
<ellipse cx="2031" cy="349" rx="19" ry="10" fill="#070a1c"/>
<ellipse cx="2079" cy="356" rx="6" ry="18" fill="#070a1c" transform="rotate(-15 2079 356)"/>
<path d="M2056,530 C2059.3,526.7 2070.8,525.0 2075,526 C2079.2,527.0 2082.5,532.3 2081,536 C2079.5,539.7 2070.3,546.3 2066,548 C2061.7,549.7 2056.7,549.0 2055,546 C2053.3,543.0 2052.7,533.3 2056,530 Z" fill="#a89070"/>
<ellipse cx="2185" cy="454" rx="3.5" ry="5" fill="#7d7a55"/>
<g clip-path="url(#landclip)"><rect x="1880" y="205" width="360" height="355" fill="#000" filter="url(#mottle)" opacity="0.38"/></g>
<path d="M1960,247 C1957.8,245.2 1968.7,238.5 1977,234 C1985.3,229.5 1997.8,224.2 2010,220 C2022.2,215.8 2045.3,208.3 2050,209 C2054.7,209.7 2043.7,219.2 2038,224 C2032.3,228.8 2024.0,234.5 2016,238 C2008.0,241.5 1999.3,243.5 1990,245 C1980.7,246.5 1962.2,248.8 1960,247 Z" fill="#eef0f2"/>
<ellipse cx="1982" cy="254" rx="6" ry="3.5" fill="#e8eaec"/>
<path d="M1990,266 C1993.7,261.5 2000.0,257.7 2010,258 C2020.0,258.3 2036.7,266.7 2050,268 C2063.3,269.3 2079.7,268.7 2090,266 C2100.3,263.3 2106.2,257.2 2112,252 C2117.8,246.8 2123.0,240.8 2125,235 C2127.0,229.2 2119.8,220.0 2124,217 C2128.2,214.0 2141.0,213.8 2150,217 C2159.0,220.2 2170.0,228.5 2178,236 C2186.0,243.5 2195.7,251.3 2198,262 C2200.3,272.7 2196.7,290.2 2192,300 C2187.3,309.8 2182.0,316.7 2170,321 C2158.0,325.3 2133.7,326.2 2120,326 C2106.3,325.8 2099.7,320.5 2088,320 C2076.3,319.5 2061.3,324.2 2050,323 C2038.7,321.8 2029.2,316.7 2020,313 C2010.8,309.3 2000.3,305.7 1995,301 C1989.7,296.3 1988.8,290.8 1988,285 C1987.2,279.2 1986.3,270.5 1990,266 Z" fill="#d9dcde" opacity="0.9"/>
<path d="M2010,270 C2016.7,266.7 2045.0,273.3 2060,275 C2075.0,276.7 2085.0,280.8 2100,280 C2115.0,279.2 2136.7,272.5 2150,270 C2163.3,267.5 2175.8,260.0 2180,265 C2184.2,270.0 2185.0,293.3 2175,300 C2165.0,306.7 2139.2,305.0 2120,305 C2100.8,305.0 2076.7,301.7 2060,300 C2043.3,298.3 2028.3,300.0 2020,295 C2011.7,290.0 2003.3,273.3 2010,270 Z" fill="#eceef0" opacity="0.6"/>
<path d="M2131,352 C2134.3,344.3 2148.5,337.0 2160,336 C2171.5,335.0 2191.3,339.0 2200,346 C2208.7,353.0 2215.3,371.7 2212,378 C2208.7,384.3 2192.0,383.3 2180,384 C2168.0,384.7 2148.2,387.3 2140,382 C2131.8,376.7 2127.7,359.7 2131,352 Z" fill="#c9c6bd" opacity="0.5"/>
<circle cx="2058.4" cy="380.8" r="175" fill="url(#earthshade)"/>
</g>
<path d="M2236.0,316.2 L2237.7,320.9 L2239.2,325.8 L2240.6,330.6 L2241.9,335.5 L2243.0,340.4 L2244.1,345.4 L2244.9,350.4 L2245.7,355.4 L2246.3,360.4 L2246.8,365.4 L2247.1,370.5 L2247.3,375.5 L2247.4,380.6 L2247.2,385.6 L2246.8,390.7 L2246.3,395.7 L2245.7,400.7 L2244.9,405.7 L2244.1,410.6 L2243.0,415.6 L2241.9,420.5 L2240.6,425.3 L2239.2,430.1 L2237.6,434.9 L2236.0,439.6 L2234.2,444.3 L2232.3,448.9 L2230.2,453.5 L2228.1,458.0 L2225.8,462.5 L2223.4,466.8 L2220.9,471.1 L2218.3,475.4 L2215.6,479.5 L2212.8,483.6 L2209.8,487.6 L2206.8,491.5 L2203.6,495.4 L2200.4,499.1 L2197.0,502.7 L2193.6,506.3 L2190.1,509.8 L2186.5,513.1 L2182.8,516.4 L2179.0,519.5 L2175.2,522.6 L2171.2,525.5 L2167.2,528.4 L2163.1,531.1 L2159.0,533.7 L2154.8,536.2 L2150.5,538.6 L2146.2,540.9 L2141.8,543.0 L2137.3,545.0 L2132.8,547.0 L2128.3,548.7 L2123.7,550.4 L2119.1,551.9 L2114.5,553.3" fill="none" stroke="#e6c067" stroke-width="2.4" stroke-linecap="round"/>
<path d="M2162.4,226.6 L2168.8,231.1 L2174.9,235.8 L2180.9,240.9 L2186.7,246.1 L2192.2,251.6 L2197.5,257.3 L2202.5,263.2 L2207.3,269.4 L2211.9,275.7 L2216.1,282.2 L2220.1,288.9 L2223.8,295.8 L2227.2,302.8 L2230.4,309.9 L2233.2,317.2 L2235.7,324.6 L2237.9,332.0 L2239.8,339.6 L2241.3,347.2 L2242.6,354.9 L2243.5,362.6 L2244.1,370.4 L2244.4,378.2 L2244.2,386.0 L2243.5,393.7 L2242.6,401.5 L2241.3,409.1 L2239.7,416.7 L2237.8,424.2 L2235.6,431.6 L2233.1,438.9 L2230.2,446.1 L2227.1,453.1 L2223.7,460.0 L2220.0,466.7 L2216.1,473.3 L2211.8,479.7 L2207.4,485.9 L2202.6,491.9 L2197.7,497.7 L2192.5,503.2 L2187.0,508.5 L2181.4,513.6 L2175.6,518.5 L2169.5,523.1 L2163.3,527.4 L2157.0,531.4 L2150.4,535.2 L2143.8,538.7 L2137.0,541.9 L2130.1,544.8 L2123.0,547.5 L2115.9,549.8 L2108.7,551.8 L2101.5,553.5 L2094.1,554.9 L2086.8,556.0 L2079.4,556.8 L2072.0,557.3 L2064.6,557.4" fill="none" stroke="#d65fb5" stroke-width="2.8" stroke-linecap="round"/>
<path d="M2230.6,436.8 L2229.1,440.9 L2227.4,445.0 L2225.7,449.1 L2223.8,453.1 L2221.9,457.0 L2219.8,460.9 L2217.7,464.8 L2215.5,468.6 L2213.1,472.3 L2210.7,476.0 L2208.2,479.6 L2205.7,483.1 L2203.0,486.6 L2200.3,490.0 L2197.4,493.4 L2194.5,496.6 L2191.5,499.8 L2188.5,503.0 L2185.4,506.0 L2182.2,509.0 L2178.9,511.8 L2175.6,514.6 L2172.2,517.3 L2168.7,520.0 L2165.2,522.5 L2161.6,524.9 L2158.0,527.3 L2154.3,529.6 L2150.5,531.7 L2146.7,533.8 L2142.9,535.8 L2139.0,537.7 L2135.1,539.5 L2131.1,541.2 L2127.1,542.8 L2123.1,544.3 L2119.1,545.6 L2115.0,546.9 L2110.8,548.1 L2106.7,549.2 L2102.5,550.2 L2098.3,551.1 L2094.1,551.9 L2089.9,552.6 L2085.7,553.1 L2081.5,553.6 L2077.2,554.0 L2073.0,554.2 L2068.7,554.4 L2064.5,554.4 L2060.2,554.4 L2056.0,554.2 L2051.7,554.0 L2047.5,553.6 L2043.3,553.1 L2039.1,552.6 L2035.0,551.9 L2030.8,551.1 L2026.7,550.3 L2022.6,549.3" fill="none" stroke="#74dc74" stroke-width="2.8" stroke-linecap="round"/>
<circle cx="2162" cy="229" r="6.5" fill="#e05ac0" stroke="#f4c8ea" stroke-width="1.5"/>
<circle cx="2223.8" cy="450.9" r="6.5" fill="#72d872" stroke="#ffffff" stroke-width="2"/>
<text x="2060.6" y="739.7" font-size="23" font-weight="bold" fill="#8d8d8d" text-anchor="middle" textLength="149.3" lengthAdjust="spacing">Charge Power</text>
<g stroke="#3a3a48" stroke-width="1.2"><path d="M1779.7,748 V830 M1995,748 V830 M2211,748 V830 M2427,748 V830"/></g>
<text x="1557.7" y="802" font-size="17" fill="#8a8a8a" text-anchor="middle">0</text>
<g clip-path="url(#chartclip)" fill="none" stroke-width="3" stroke-linejoin="round">
<path d="M1572.6,798.2 H2549" stroke="#c883c8" stroke-width="4.5"/>
<path d="M1572.6,796.7 H2549" stroke="#8ab6e0" stroke-width="1.6"/>
<path d="M1572.6,798.2 L1621,823.2 C1632,812.2 1650,805.2 1690,802.7 C1740,800.2 1790,799.7 1880,799.2 H2360" stroke="#6fe06f"/>
<path d="M1678.6,798.2 C1696.6,776.2 1713.6,766.5 1726.1,766.5 C1738.6,766.5 1758.1,774.2 1779.1,778.6 C1803.1,785.2 1819.0,790.2 1834.0,798.2 L1885.0,822.4000000000001 C1896.4,812.2 1918.4,805.2 1958.4,802.7 C2008.0,800.2 2058.0,799.7 2138.0,799.2" stroke="#5cb6e6"/>
<path d="M1886.5,798.2 C1904.5,776.2 1921.5,766.5 1934.0,766.5 C1946.5,766.5 1966.0,774.2 1987.0,778.6 C2011.0,785.2 2022.8,790.2 2037.8,798.2 L2084.6,822.4000000000001 C2096.0,812.2 2118.0,805.2 2158.0,802.7 C2207.6,800.2 2257.6,799.7 2337.6,799.2" stroke="#ecd068"/>
<path d="M2148.0,798.2 C2166.0,776.2 2183.0,766.5 2195.5,766.5 C2208.0,766.5 2227.5,774.2 2248.5,778.6 C2272.5,785.2 2283.7,790.2 2298.7,798.2 L2345.0,822.4000000000001 C2356.4,812.2 2378.4,805.2 2418.4,802.7 C2468.0,800.2 2518.0,799.7 2598.0,799.2" stroke="#e060b4"/>
<path d="M2353.0,798.2 C2371.0,776.2 2388.0,766.5 2400.5,766.5 C2413.0,766.5 2432.5,774.2 2453.5,778.6 C2477.5,785.2 2493.7,790.2 2508.7,798.2 L2560.0,822.4000000000001 C2571.4,812.2 2593.4,805.2 2633.4,802.7 C2683.0,800.2 2733.0,799.7 2813.0,799.2" stroke="#6fe06f"/>
</g>
<rect x="541" y="901" width="4" height="425" fill="url(#fadebar)"/>
<text x="648.4" y="957.5" font-size="27" fill="#4a4a4a" textLength="23.9" lengthAdjust="spacing" stroke="#4a4a4a" stroke-width="0.4" style="white-space:pre">1.</text>
<text x="679.8" y="957.5" font-size="27" fill="#3c3c3c" font-weight="bold" textLength="245.6" lengthAdjust="spacing" stroke="#3c3c3c" stroke-width="0.4" style="white-space:pre">Ground track map</text>
<text x="925.4" y="957.5" font-size="27" fill="#4a4a4a" textLength="1404.1" lengthAdjust="spacing" stroke="#4a4a4a" stroke-width="0.4" style="white-space:pre"> — Blue Marble background with coastlines. Each of the 4 satellites appears as a colored dot, with positions</text>
<text x="679.8" y="1002.9" font-size="27" fill="#4a4a4a" textLength="1185.2" lengthAdjust="spacing" stroke="#4a4a4a" stroke-width="0.4" style="white-space:pre">converted from the model's ECI frame through Earth rotation (ECEF) to lon/lat every frame.</text>
<text x="648.4" y="1076.9" font-size="27" fill="#4a4a4a" textLength="23.9" lengthAdjust="spacing" stroke="#4a4a4a" stroke-width="0.4" style="white-space:pre">2.</text>
<text x="679.8" y="1076.9" font-size="27" fill="#3c3c3c" font-weight="bold" textLength="300.8" lengthAdjust="spacing" stroke="#3c3c3c" stroke-width="0.4" style="white-space:pre">Telemetry strip charts</text>
<text x="980.6" y="1076.9" font-size="27" fill="#4a4a4a" textLength="1478.4" lengthAdjust="spacing" stroke="#4a4a4a" stroke-width="0.4" style="white-space:pre"> — Battery SOC (%) and charge power (W) for all 4 satellites, plotted over a rolling 90-minute window. SOC panel</text>
<text x="679.8" y="1122.3" font-size="27" fill="#4a4a4a" textLength="808.0" lengthAdjust="spacing" stroke="#4a4a4a" stroke-width="0.4" style="white-space:pre">includes a red band below 20% to flag low-charge conditions.</text>
<text x="648.4" y="1196.4" font-size="27" fill="#4a4a4a" textLength="23.9" lengthAdjust="spacing" stroke="#4a4a4a" stroke-width="0.4" style="white-space:pre">3.</text>
<text x="679.8" y="1196.4" font-size="27" fill="#3c3c3c" font-weight="bold" textLength="115.5" lengthAdjust="spacing" stroke="#3c3c3c" stroke-width="0.4" style="white-space:pre">Controls</text>
<text x="795.3" y="1196.4" font-size="27" fill="#4a4a4a" textLength="1665.2" lengthAdjust="spacing" stroke="#4a4a4a" stroke-width="0.4" style="white-space:pre"> — Play/Pause, Reset, and a logarithmic speed slider ranging from ~10x to ~10,000x real time. Status bar shows simulation time,</text>
<text x="679.8" y="1241.8" font-size="27" fill="#4a4a4a" textLength="817.8" lengthAdjust="spacing" stroke="#4a4a4a" stroke-width="0.4" style="white-space:pre">orbit number, how many satellites are sunlit, and average SOC.</text>
<text x="599.3" y="1314.6" font-size="27" fill="#a9a9a9" textLength="1847.2" lengthAdjust="spacing" stroke="#a9a9a9" stroke-width="0.4" style="white-space:pre">The tick loop sub-steps the integrator each frame to maintain accuracy at high speed multipliers, caps the simulation advance per frame, and</text>
<rect x="484.6" y="1321" width="2025.2" height="2" fill="#cfcbe8"/>
<text x="501.0" y="1387.4" font-size="27" fill="#333333" textLength="1832.8" lengthAdjust="spacing" stroke="#333333" stroke-width="0.4" style="white-space:pre">Create a dashboard that shows me the positions of all the satellites as well as their states of charge.  Make it run the simulation interactively.</text>
<rect x="484.6" y="1426.5" width="2025.2" height="2" fill="#cfcbe8"/>
<path d="M2524.16,954.90 L2528.78,955.36 L2528.78,960.64 L2524.16,961.10 L2523.20,963.42 L2526.14,967.01 L2522.41,970.74 L2518.82,967.80 L2516.50,968.76 L2516.04,973.38 L2510.76,973.38 L2510.30,968.76 L2507.98,967.80 L2504.39,970.74 L2500.66,967.01 L2503.60,963.42 L2502.64,961.10 L2498.02,960.64 L2498.02,955.36 L2502.64,954.90 L2503.60,952.58 L2500.66,948.99 L2504.39,945.26 L2507.98,948.20 L2510.30,947.24 L2510.76,942.62 L2516.04,942.62 L2516.50,947.24 L2518.82,948.20 L2522.41,945.26 L2526.14,948.99 L2523.20,952.58 Z" fill="none" stroke="#5a5a5a" stroke-width="2.2" stroke-linejoin="round"/>
<circle cx="2513.4" cy="958" r="4.8" fill="none" stroke="#5a5a5a" stroke-width="2.2"/>
<g fill="none" stroke="#5a5a5a" stroke-width="2.2" stroke-linecap="round" stroke-linejoin="round"><path d="M2513.5,1018 V1037 M2505.5,1029 L2513.5,1037 L2521.5,1029"/><path d="M2502,1043.5 H2525"/></g>
<path d="M2517.5,1096 L2510,1104.5 L2517.5,1113" fill="none" stroke="#5a5a5a" stroke-width="2.2" stroke-linecap="round" stroke-linejoin="round"/>
<rect x="0" y="1493" width="2560" height="44" fill="#3778c6"/>
<rect x="0" y="1493" width="70" height="44" fill="#3b8a59"/>
<rect x="2346" y="1493" width="138" height="44" fill="#1f3f66"/>
<g fill="none" stroke="#ffffff" stroke-width="2" stroke-linecap="round"><path d="M26,1507 L33,1514 L26,1521"/><path d="M42,1503 L36,1509 L42,1515"/></g>
<g fill="none" stroke="#ffffff" stroke-width="2.1"><path d="M87,1503 V1517"/><circle cx="87" cy="1521" r="3.5"/><circle cx="102" cy="1506" r="3.5"/><path d="M101.5,1509.5 q-1,9 -11,11"/></g>
<text x="117.0" y="1524.3" font-size="26" fill="#ffffff" textLength="64.0" lengthAdjust="spacing" stroke="#fff" stroke-width="0.35" style="white-space:pre">main*</text>
<g fill="none" stroke="#ffffff" stroke-width="2" stroke-linecap="round" stroke-linejoin="round"><path d="M203,1519 q-6,0 -6,-6 q0,-5 5,-6 q2,-6 9,-6 q6,0 8,6 q4,1 4,6 q0,6 -6,6"/><path d="M209.5,1524 V1511 M205,1515 L209.5,1510.5 L214,1515"/></g>
<g fill="none" stroke="#ffffff" stroke-width="2"><circle cx="258" cy="1506" r="3.3"/><circle cx="258" cy="1522" r="3.3"/><path d="M258,1509.5 V1518.5 M266,1501 V1526"/><circle cx="271" cy="1513.5" r="3.3"/></g>
<g fill="none" stroke="#ffffff" stroke-width="2" stroke-linejoin="round"><path d="M318,1517 L331,1504 q5,-3 8,-3 q0,3 -3,8 L323,1522 z"/><path d="M318,1517 l-3,-2 l7,-5 M323,1522 l2,3 l5,-7"/><path d="M316,1522 v4 h4"/></g>
<g fill="none" stroke="#ffffff" stroke-width="2" stroke-linecap="round"><path d="M346,1525 l5,-5"/><rect x="349" y="1510" width="9" height="13" rx="3" transform="rotate(45 353.5 1516.5)"/><path d="M357,1511 l8,-8 M360,1506 l2,-2 M364,1510 l2,-2"/></g>
<text x="377.0" y="1524.3" font-size="26" fill="#ffffff" textLength="125.6" lengthAdjust="spacing" stroke="#fff" stroke-width="0.35" style="white-space:pre">Launchpad</text>
<text x="536.6" y="1524.3" font-size="26" fill="#ffffff" textLength="236.9" lengthAdjust="spacing" stroke="#fff" stroke-width="0.35" style="white-space:pre">SatelliteComponents</text>
<g fill="none" stroke="#ffffff" stroke-width="2"><circle cx="821" cy="1515" r="11.5"/><path d="M816,1510 L826,1520 M826,1510 L816,1520"/></g>
<text x="843.0" y="1524.3" font-size="26" fill="#ffffff" textLength="14.0" lengthAdjust="spacing" stroke="#fff" stroke-width="0.35" style="white-space:pre">0</text>
<g fill="none" stroke="#ffffff" stroke-width="2" stroke-linejoin="round"><path d="M879.2,1503 L891.5,1526 H867 z"/><path d="M879.2,1511 V1519"/></g><circle cx="879.2" cy="1522" r="1.3" fill="#ffffff"/>
<text x="901.4" y="1524.3" font-size="26" fill="#ffffff" textLength="12.9" lengthAdjust="spacing" stroke="#fff" stroke-width="0.35" style="white-space:pre">0</text>
<g fill="none" stroke="#ffffff" stroke-width="2"><circle cx="936" cy="1515" r="11.5"/><path d="M936,1512 V1521"/></g><circle cx="936" cy="1508.5" r="1.4" fill="#ffffff"/>
<text x="958.0" y="1524.3" font-size="26" fill="#ffffff" textLength="29.0" lengthAdjust="spacing" stroke="#fff" stroke-width="0.35" style="white-space:pre">49</text>
<g fill="none" stroke="#ffffff" stroke-width="2.1" stroke-linecap="round" stroke-linejoin="round"><path d="M1025,1516 q2,-10 16,-10 v-5 l7,7 l-7,7 v-5 q-10,0 -16,6"/><circle cx="1033" cy="1524" r="3.3"/></g>
<text x="1056.7" y="1524.3" font-size="26" fill="#ffffff" textLength="118.8" lengthAdjust="spacing" stroke="#fff" stroke-width="0.35" style="white-space:pre">Live Share</text>
<text x="1208.8" y="1524.3" font-size="26" fill="#ffffff" textLength="352.8" lengthAdjust="spacing" stroke="#fff" stroke-width="0.35" style="white-space:pre">Julia env: SatelliteComponents</text>
<g fill="none" stroke="#ffffff" stroke-width="2"><circle cx="2378.5" cy="1512" r="9"/><path d="M2385.0,1518.5 L2392.5,1526 M2373.5,1512 H2383.5 M2378.5,1507 V1517"/></g>
<g fill="none" stroke="#ffffff" stroke-width="2"><circle cx="2447.6" cy="1512" r="9"/><path d="M2454.1,1518.5 L2461.6,1526 M2442.6,1512 H2452.6 M2447.6,1507 V1517"/></g>
<g fill="none" stroke="#ffffff" stroke-width="2" stroke-linejoin="round"><path d="M2505,1521.5 q3,-3 3,-8 v-3 q0,-8 7,-8 q7,0 7,8 v3 q0,5 3,8 z"/><path d="M2512.5,1524 q2.5,3 5,0"/></g>
</svg>
</body></html>
